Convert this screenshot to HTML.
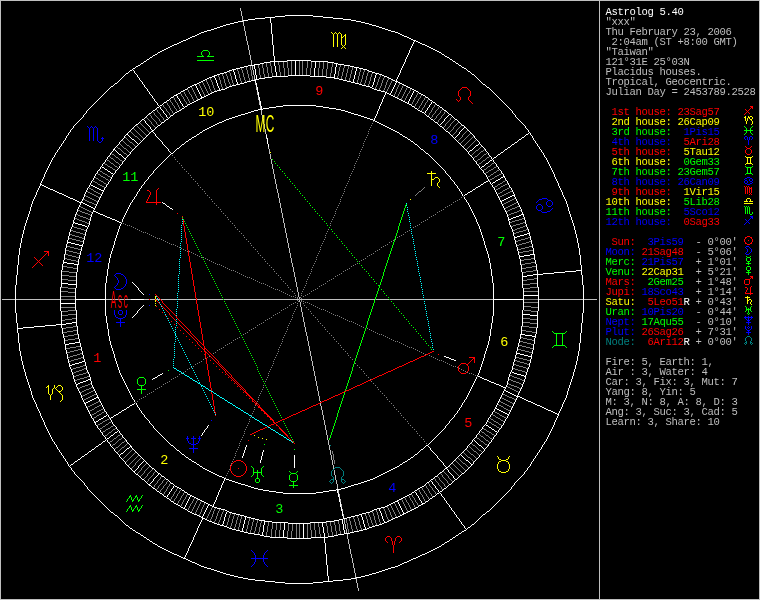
<!DOCTYPE html><html><head><meta charset="utf-8"><title>Astrolog 5.40</title><style>
html,body{margin:0;padding:0;background:#000;}
#w{position:relative;width:760px;height:600px;overflow:hidden;background:#000;}
#w svg{position:absolute;left:0;top:0;}
.l{position:absolute;left:605.5px;height:10px;line-height:10px;font-family:"Liberation Mono",monospace;font-size:10.6px;letter-spacing:-0.36px;white-space:pre;color:#bfbfbf;}
.h{position:absolute;font-family:"Liberation Mono",monospace;font-size:13.5px;letter-spacing:-0.1px;line-height:12px;height:12px;white-space:pre;}
.g{position:absolute;font-family:"Liberation Sans",sans-serif;-webkit-text-stroke:0.2px;white-space:pre;transform-origin:0 0;line-height:1;}
#t{position:absolute;left:0;top:0;width:760px;height:600px;will-change:transform;}
</style></head><body><div id="w">
<svg width="760" height="600" viewBox="0 0 760 600" shape-rendering="crispEdges" fill="none" stroke-width="1"><g transform="translate(0,0.5)"><path stroke="#bfbfbf" d="M0 0h760M0 1h1M599 1h1M759 1h1M0 2h1M599 2h1M759 2h1M0 3h1M599 3h1M759 3h1M0 4h1M599 4h1M759 4h1M0 5h1M599 5h1M759 5h1M0 6h1M599 6h1M759 6h1M0 7h1M599 7h1M759 7h1M0 8h1M240 8h1M599 8h1M759 8h1M0 9h1M240 9h1M599 9h1M759 9h1M0 10h1M240 10h1M599 10h1M759 10h1M0 11h1M241 11h1M599 11h1M759 11h1M0 12h1M241 12h1M599 12h1M759 12h1M0 13h1M241 13h1M599 13h1M759 13h1M0 14h1M241 14h1M599 14h1M759 14h1M0 15h1M241 15h1M599 15h1M759 15h1M0 16h1M242 16h1M599 16h1M759 16h1M0 17h1M242 17h1M599 17h1M759 17h1M0 18h1M242 18h1M599 18h1M759 18h1M0 19h1M242 19h1M599 19h1M759 19h1M0 20h1M242 20h1M599 20h1M759 20h1M0 21h1M243 21h1M599 21h1M759 21h1M0 22h1M243 22h1M599 22h1M759 22h1M0 23h1M243 23h1M599 23h1M759 23h1M0 24h1M243 24h1M599 24h1M759 24h1M0 25h1M243 25h1M599 25h1M759 25h1M0 26h1M244 26h1M599 26h1M759 26h1M0 27h1M244 27h1M599 27h1M759 27h1M0 28h1M244 28h1M599 28h1M759 28h1M0 29h1M244 29h1M599 29h1M759 29h1M0 30h1M244 30h1M599 30h1M759 30h1M0 31h1M245 31h1M599 31h1M759 31h1M0 32h1M245 32h1M599 32h1M759 32h1M0 33h1M245 33h1M599 33h1M759 33h1M0 34h1M245 34h1M599 34h1M759 34h1M0 35h1M245 35h1M599 35h1M759 35h1M0 36h1M246 36h1M599 36h1M759 36h1M0 37h1M246 37h1M599 37h1M759 37h1M0 38h1M246 38h1M599 38h1M759 38h1M0 39h1M246 39h1M599 39h1M759 39h1M0 40h1M246 40h1M599 40h1M759 40h1M0 41h1M247 41h1M599 41h1M759 41h1M0 42h1M247 42h1M599 42h1M759 42h1M0 43h1M247 43h1M599 43h1M759 43h1M0 44h1M247 44h1M599 44h1M759 44h1M0 45h1M248 45h1M599 45h1M759 45h1M0 46h1M248 46h1M599 46h1M759 46h1M0 47h1M248 47h1M599 47h1M759 47h1M0 48h1M248 48h1M599 48h1M759 48h1M0 49h1M248 49h1M599 49h1M759 49h1M0 50h1M249 50h1M599 50h1M759 50h1M0 51h1M249 51h1M599 51h1M759 51h1M0 52h1M249 52h1M599 52h1M759 52h1M0 53h1M249 53h1M599 53h1M759 53h1M0 54h1M249 54h1M599 54h1M759 54h1M0 55h1M250 55h1M599 55h1M759 55h1M0 56h1M250 56h1M599 56h1M759 56h1M0 57h1M250 57h1M599 57h1M759 57h1M0 58h1M250 58h1M599 58h1M759 58h1M0 59h1M250 59h1M599 59h1M759 59h1M0 60h1M251 60h1M599 60h1M759 60h1M0 61h1M251 61h1M599 61h1M759 61h1M0 62h1M251 62h1M599 62h1M759 62h1M0 63h1M251 63h1M599 63h1M759 63h1M0 64h1M251 64h1M599 64h1M759 64h1M0 65h1M599 65h1M759 65h1M0 66h1M252 66h1M599 66h1M759 66h1M0 67h1M252 67h1M599 67h1M759 67h1M0 68h1M252 68h1M599 68h1M759 68h1M0 69h1M252 69h1M599 69h1M759 69h1M0 70h1M253 70h1M599 70h1M759 70h1M0 71h1M253 71h1M599 71h1M759 71h1M0 72h1M253 72h1M599 72h1M759 72h1M0 73h1M253 73h1M599 73h1M759 73h1M0 74h1M253 74h1M599 74h1M759 74h1M0 75h1M254 75h1M599 75h1M759 75h1M0 76h1M254 76h1M599 76h1M759 76h1M0 77h1M254 77h1M599 77h1M759 77h1M0 78h1M254 78h1M599 78h1M759 78h1M0 79h1M254 79h1M599 79h1M759 79h1M0 80h1M599 80h1M759 80h1M0 81h1M599 81h1M759 81h1M0 82h1M599 82h1M759 82h1M0 83h1M255 83h1M599 83h1M759 83h1M0 84h1M255 84h1M599 84h1M759 84h1M0 85h1M599 85h1M759 85h1M0 86h1M599 86h1M759 86h1M0 87h1M256 87h1M599 87h1M759 87h1M0 88h1M256 88h1M599 88h1M759 88h1M0 89h1M256 89h1M599 89h1M759 89h1M0 90h1M599 90h1M759 90h1M0 91h1M599 91h1M759 91h1M0 92h1M257 92h1M599 92h1M759 92h1M0 93h1M257 93h1M599 93h1M759 93h1M0 94h1M257 94h1M599 94h1M759 94h1M0 95h1M599 95h1M759 95h1M0 96h1M599 96h1M759 96h1M0 97h1M258 97h1M599 97h1M759 97h1M0 98h1M258 98h1M599 98h1M759 98h1M0 99h1M258 99h1M599 99h1M759 99h1M0 100h1M599 100h1M759 100h1M0 101h1M259 101h1M599 101h1M759 101h1M0 102h1M259 102h1M599 102h1M759 102h1M0 103h1M259 103h1M599 103h1M759 103h1M0 104h1M259 104h1M599 104h1M759 104h1M0 105h1M599 105h1M759 105h1M0 106h1M260 106h1M599 106h1M759 106h1M0 107h1M260 107h1M599 107h1M759 107h1M0 108h1M260 108h1M599 108h1M759 108h1M0 109h1M599 109h1M759 109h1M0 110h1M261 110h1M599 110h1M759 110h1M0 111h1M261 111h1M599 111h1M759 111h1M0 112h1M261 112h1M599 112h1M759 112h1M0 113h1M261 113h1M599 113h1M759 113h1M0 114h1M261 114h1M599 114h1M759 114h1M0 115h1M262 115h1M599 115h1M759 115h1M0 116h1M262 116h1M599 116h1M759 116h1M0 117h1M262 117h1M599 117h1M759 117h1M0 118h1M262 118h1M599 118h1M759 118h1M0 119h1M263 119h1M599 119h1M759 119h1M0 120h1M263 120h1M599 120h1M759 120h1M0 121h1M263 121h1M599 121h1M759 121h1M0 122h1M263 122h1M599 122h1M759 122h1M0 123h1M263 123h1M599 123h1M759 123h1M0 124h1M264 124h1M599 124h1M759 124h1M0 125h1M264 125h1M599 125h1M759 125h1M0 126h1M264 126h1M599 126h1M759 126h1M0 127h1M264 127h1M599 127h1M759 127h1M0 128h1M264 128h1M599 128h1M759 128h1M0 129h1M265 129h1M599 129h1M759 129h1M0 130h1M265 130h1M599 130h1M759 130h1M0 131h1M265 131h1M599 131h1M759 131h1M0 132h1M265 132h1M599 132h1M759 132h1M0 133h1M265 133h1M599 133h1M759 133h1M0 134h1M266 134h1M599 134h1M759 134h1M0 135h1M599 135h1M759 135h1M0 136h1M599 136h1M759 136h1M0 137h1M599 137h1M759 137h1M0 138h1M266 138h1M599 138h1M759 138h1M0 139h1M599 139h1M759 139h1M0 140h1M599 140h1M759 140h1M0 141h1M599 141h1M759 141h1M0 142h1M599 142h1M759 142h1M0 143h1M599 143h1M759 143h1M0 144h1M599 144h1M759 144h1M0 145h1M599 145h1M759 145h1M0 146h1M599 146h1M759 146h1M0 147h1M268 147h1M599 147h1M759 147h1M0 148h1M268 148h1M599 148h1M759 148h1M0 149h1M269 149h1M599 149h1M759 149h1M0 150h1M269 150h1M599 150h1M759 150h1M0 151h1M269 151h1M599 151h1M759 151h1M0 152h1M269 152h1M599 152h1M759 152h1M0 153h1M269 153h1M599 153h1M759 153h1M0 154h1M270 154h1M599 154h1M759 154h1M0 155h1M270 155h1M599 155h1M759 155h1M0 156h1M270 156h1M599 156h1M759 156h1M0 157h1M270 157h1M599 157h1M759 157h1M0 158h1M270 158h1M599 158h1M759 158h1M0 159h1M271 159h1M599 159h1M759 159h1M0 160h1M271 160h1M599 160h1M759 160h1M0 161h1M271 161h1M599 161h1M759 161h1M0 162h1M271 162h1M599 162h1M759 162h1M0 163h1M271 163h1M599 163h1M759 163h1M0 164h1M272 164h1M599 164h1M759 164h1M0 165h1M272 165h1M599 165h1M759 165h1M0 166h1M272 166h1M599 166h1M759 166h1M0 167h1M272 167h1M599 167h1M759 167h1M0 168h1M272 168h1M599 168h1M759 168h1M0 169h1M273 169h1M599 169h1M759 169h1M0 170h1M273 170h1M599 170h1M759 170h1M0 171h1M273 171h1M599 171h1M759 171h1M0 172h1M273 172h1M599 172h1M759 172h1M0 173h1M273 173h1M599 173h1M759 173h1M0 174h1M274 174h1M599 174h1M759 174h1M0 175h1M274 175h1M599 175h1M759 175h1M0 176h1M274 176h1M599 176h1M759 176h1M0 177h1M274 177h1M599 177h1M759 177h1M0 178h1M274 178h1M599 178h1M759 178h1M0 179h1M275 179h1M599 179h1M759 179h1M0 180h1M275 180h1M599 180h1M759 180h1M0 181h1M275 181h1M599 181h1M759 181h1M0 182h1M275 182h1M599 182h1M759 182h1M0 183h1M275 183h1M599 183h1M759 183h1M0 184h1M276 184h1M599 184h1M759 184h1M0 185h1M276 185h1M599 185h1M759 185h1M0 186h1M276 186h1M599 186h1M759 186h1M0 187h1M276 187h1M599 187h1M759 187h1M0 188h1M276 188h1M599 188h1M759 188h1M0 189h1M277 189h1M599 189h1M759 189h1M0 190h1M277 190h1M599 190h1M759 190h1M0 191h1M277 191h1M599 191h1M759 191h1M0 192h1M277 192h1M599 192h1M759 192h1M0 193h1M278 193h1M599 193h1M759 193h1M0 194h1M278 194h1M599 194h1M759 194h1M0 195h1M278 195h1M599 195h1M759 195h1M0 196h1M278 196h1M599 196h1M759 196h1M0 197h1M278 197h1M599 197h1M759 197h1M0 198h1M279 198h1M599 198h1M759 198h1M0 199h1M279 199h1M599 199h1M759 199h1M0 200h1M279 200h1M599 200h1M759 200h1M0 201h1M279 201h1M599 201h1M759 201h1M0 202h1M279 202h1M599 202h1M759 202h1M0 203h1M280 203h1M599 203h1M759 203h1M0 204h1M280 204h1M599 204h1M759 204h1M0 205h1M280 205h1M599 205h1M759 205h1M0 206h1M280 206h1M599 206h1M759 206h1M0 207h1M280 207h1M599 207h1M759 207h1M0 208h1M281 208h1M599 208h1M759 208h1M0 209h1M281 209h1M599 209h1M759 209h1M0 210h1M281 210h1M599 210h1M759 210h1M0 211h1M281 211h1M599 211h1M759 211h1M0 212h1M281 212h1M599 212h1M759 212h1M0 213h1M282 213h1M599 213h1M759 213h1M0 214h1M282 214h1M599 214h1M759 214h1M0 215h1M282 215h1M599 215h1M759 215h1M0 216h1M282 216h1M599 216h1M759 216h1M0 217h1M282 217h1M599 217h1M759 217h1M0 218h1M283 218h1M599 218h1M759 218h1M0 219h1M283 219h1M599 219h1M759 219h1M0 220h1M283 220h1M599 220h1M759 220h1M0 221h1M283 221h1M599 221h1M759 221h1M0 222h1M283 222h1M599 222h1M759 222h1M0 223h1M284 223h1M599 223h1M759 223h1M0 224h1M284 224h1M599 224h1M759 224h1M0 225h1M284 225h1M599 225h1M759 225h1M0 226h1M284 226h1M599 226h1M759 226h1M0 227h1M284 227h1M599 227h1M759 227h1M0 228h1M285 228h1M599 228h1M759 228h1M0 229h1M285 229h1M599 229h1M759 229h1M0 230h1M285 230h1M599 230h1M759 230h1M0 231h1M285 231h1M599 231h1M759 231h1M0 232h1M285 232h1M599 232h1M759 232h1M0 233h1M286 233h1M599 233h1M759 233h1M0 234h1M286 234h1M599 234h1M759 234h1M0 235h1M286 235h1M599 235h1M759 235h1M0 236h1M286 236h1M599 236h1M759 236h1M0 237h1M286 237h1M599 237h1M759 237h1M0 238h1M287 238h1M599 238h1M759 238h1M0 239h1M287 239h1M599 239h1M759 239h1M0 240h1M287 240h1M599 240h1M759 240h1M0 241h1M287 241h1M599 241h1M759 241h1M0 242h1M287 242h1M599 242h1M759 242h1M0 243h1M288 243h1M599 243h1M759 243h1M0 244h1M288 244h1M599 244h1M759 244h1M0 245h1M288 245h1M599 245h1M759 245h1M0 246h1M288 246h1M599 246h1M759 246h1M0 247h1M288 247h1M599 247h1M759 247h1M0 248h1M289 248h1M599 248h1M759 248h1M0 249h1M289 249h1M599 249h1M759 249h1M0 250h1M289 250h1M599 250h1M759 250h1M0 251h1M289 251h1M599 251h1M759 251h1M0 252h1M289 252h1M599 252h1M759 252h1M0 253h1M290 253h1M599 253h1M759 253h1M0 254h1M290 254h1M599 254h1M759 254h1M0 255h1M290 255h1M599 255h1M759 255h1M0 256h1M290 256h1M599 256h1M759 256h1M0 257h1M290 257h1M599 257h1M759 257h1M0 258h1M291 258h1M599 258h1M759 258h1M0 259h1M291 259h1M599 259h1M759 259h1M0 260h1M291 260h1M599 260h1M759 260h1M0 261h1M291 261h1M599 261h1M759 261h1M0 262h1M291 262h1M599 262h1M759 262h1M0 263h1M292 263h1M599 263h1M759 263h1M0 264h1M292 264h1M599 264h1M759 264h1M0 265h1M292 265h1M599 265h1M759 265h1M0 266h1M292 266h1M599 266h1M759 266h1M0 267h1M293 267h1M599 267h1M759 267h1M0 268h1M293 268h1M599 268h1M759 268h1M0 269h1M293 269h1M599 269h1M759 269h1M0 270h1M293 270h1M599 270h1M759 270h1M0 271h1M293 271h1M599 271h1M759 271h1M0 272h1M294 272h1M599 272h1M759 272h1M0 273h1M294 273h1M599 273h1M759 273h1M0 274h1M294 274h1M599 274h1M759 274h1M0 275h1M294 275h1M599 275h1M759 275h1M0 276h1M294 276h1M599 276h1M759 276h1M0 277h1M295 277h1M599 277h1M759 277h1M0 278h1M295 278h1M599 278h1M759 278h1M0 279h1M295 279h1M599 279h1M759 279h1M0 280h1M295 280h1M599 280h1M759 280h1M0 281h1M295 281h1M599 281h1M759 281h1M0 282h1M296 282h1M599 282h1M759 282h1M0 283h1M296 283h1M599 283h1M759 283h1M0 284h1M296 284h1M599 284h1M759 284h1M0 285h1M296 285h1M599 285h1M759 285h1M0 286h1M296 286h1M599 286h1M759 286h1M0 287h1M297 287h1M599 287h1M759 287h1M0 288h1M297 288h1M599 288h1M759 288h1M0 289h1M297 289h1M599 289h1M759 289h1M0 290h1M297 290h1M599 290h1M759 290h1M0 291h1M297 291h1M599 291h1M759 291h1M0 292h1M298 292h1M599 292h1M759 292h1M0 293h1M298 293h1M599 293h1M759 293h1M0 294h1M298 294h1M599 294h1M759 294h1M0 295h1M298 295h1M599 295h1M759 295h1M0 296h1M298 296h1M599 296h1M759 296h1M0 297h1M299 297h1M599 297h1M759 297h1M0 298h1M299 298h1M599 298h1M759 298h1M0 299h1M2 299h13M16 299h44M106 299h25M144 299h5M150 299h5M156 299h4M161 299h16M178 299h18M197 299h26M224 299h75M300 299h75M376 299h13M390 299h34M425 299h68M539 299h44M584 299h13M599 299h1M759 299h1M0 300h1M299 300h1M599 300h1M759 300h1M0 301h1M299 301h1M599 301h1M759 301h1M0 302h1M300 302h1M599 302h1M759 302h1M0 303h1M300 303h1M599 303h1M759 303h1M0 304h1M300 304h1M599 304h1M759 304h1M0 305h1M300 305h1M599 305h1M759 305h1M0 306h1M300 306h1M599 306h1M759 306h1M0 307h1M301 307h1M599 307h1M759 307h1M0 308h1M301 308h1M599 308h1M759 308h1M0 309h1M301 309h1M599 309h1M759 309h1M0 310h1M301 310h1M599 310h1M759 310h1M0 311h1M301 311h1M599 311h1M759 311h1M0 312h1M302 312h1M599 312h1M759 312h1M0 313h1M302 313h1M599 313h1M759 313h1M0 314h1M302 314h1M599 314h1M759 314h1M0 315h1M302 315h1M599 315h1M759 315h1M0 316h1M302 316h1M599 316h1M759 316h1M0 317h1M303 317h1M599 317h1M759 317h1M0 318h1M303 318h1M599 318h1M759 318h1M0 319h1M303 319h1M599 319h1M759 319h1M0 320h1M303 320h1M599 320h1M759 320h1M0 321h1M303 321h1M599 321h1M759 321h1M0 322h1M304 322h1M599 322h1M759 322h1M0 323h1M304 323h1M599 323h1M759 323h1M0 324h1M304 324h1M599 324h1M759 324h1M0 325h1M304 325h1M599 325h1M759 325h1M0 326h1M304 326h1M599 326h1M759 326h1M0 327h1M305 327h1M599 327h1M759 327h1M0 328h1M305 328h1M599 328h1M759 328h1M0 329h1M305 329h1M599 329h1M759 329h1M0 330h1M305 330h1M599 330h1M759 330h1M0 331h1M305 331h1M599 331h1M759 331h1M0 332h1M306 332h1M599 332h1M759 332h1M0 333h1M306 333h1M599 333h1M759 333h1M0 334h1M306 334h1M599 334h1M759 334h1M0 335h1M306 335h1M599 335h1M759 335h1M0 336h1M307 336h1M599 336h1M759 336h1M0 337h1M307 337h1M599 337h1M759 337h1M0 338h1M307 338h1M599 338h1M759 338h1M0 339h1M307 339h1M599 339h1M759 339h1M0 340h1M307 340h1M599 340h1M759 340h1M0 341h1M308 341h1M599 341h1M759 341h1M0 342h1M308 342h1M599 342h1M759 342h1M0 343h1M308 343h1M599 343h1M759 343h1M0 344h1M308 344h1M599 344h1M759 344h1M0 345h1M308 345h1M599 345h1M759 345h1M0 346h1M309 346h1M599 346h1M759 346h1M0 347h1M309 347h1M599 347h1M759 347h1M0 348h1M309 348h1M599 348h1M759 348h1M0 349h1M309 349h1M599 349h1M759 349h1M0 350h1M309 350h1M599 350h1M759 350h1M0 351h1M310 351h1M599 351h1M759 351h1M0 352h1M310 352h1M599 352h1M759 352h1M0 353h1M310 353h1M599 353h1M759 353h1M0 354h1M310 354h1M599 354h1M759 354h1M0 355h1M310 355h1M599 355h1M759 355h1M0 356h1M311 356h1M599 356h1M759 356h1M0 357h1M311 357h1M599 357h1M759 357h1M0 358h1M311 358h1M599 358h1M759 358h1M0 359h1M311 359h1M599 359h1M759 359h1M0 360h1M311 360h1M599 360h1M759 360h1M0 361h1M312 361h1M599 361h1M759 361h1M0 362h1M312 362h1M599 362h1M759 362h1M0 363h1M312 363h1M599 363h1M759 363h1M0 364h1M312 364h1M599 364h1M759 364h1M0 365h1M312 365h1M599 365h1M759 365h1M0 366h1M313 366h1M599 366h1M759 366h1M0 367h1M313 367h1M599 367h1M759 367h1M0 368h1M313 368h1M599 368h1M759 368h1M0 369h1M313 369h1M599 369h1M759 369h1M0 370h1M313 370h1M599 370h1M759 370h1M0 371h1M314 371h1M599 371h1M759 371h1M0 372h1M314 372h1M599 372h1M759 372h1M0 373h1M314 373h1M599 373h1M759 373h1M0 374h1M314 374h1M599 374h1M759 374h1M0 375h1M314 375h1M599 375h1M759 375h1M0 376h1M315 376h1M599 376h1M759 376h1M0 377h1M315 377h1M599 377h1M759 377h1M0 378h1M315 378h1M599 378h1M759 378h1M0 379h1M315 379h1M599 379h1M759 379h1M0 380h1M315 380h1M599 380h1M759 380h1M0 381h1M316 381h1M599 381h1M759 381h1M0 382h1M316 382h1M599 382h1M759 382h1M0 383h1M316 383h1M599 383h1M759 383h1M0 384h1M316 384h1M599 384h1M759 384h1M0 385h1M316 385h1M599 385h1M759 385h1M0 386h1M317 386h1M599 386h1M759 386h1M0 387h1M317 387h1M599 387h1M759 387h1M0 388h1M317 388h1M599 388h1M759 388h1M0 389h1M317 389h1M599 389h1M759 389h1M0 390h1M317 390h1M599 390h1M759 390h1M0 391h1M318 391h1M599 391h1M759 391h1M0 392h1M318 392h1M599 392h1M759 392h1M0 393h1M318 393h1M599 393h1M759 393h1M0 394h1M318 394h1M599 394h1M759 394h1M0 395h1M318 395h1M599 395h1M759 395h1M0 396h1M319 396h1M599 396h1M759 396h1M0 397h1M319 397h1M599 397h1M759 397h1M0 398h1M319 398h1M599 398h1M759 398h1M0 399h1M319 399h1M599 399h1M759 399h1M0 400h1M319 400h1M599 400h1M759 400h1M0 401h1M320 401h1M599 401h1M759 401h1M0 402h1M599 402h1M759 402h1M0 403h1M320 403h1M599 403h1M759 403h1M0 404h1M320 404h1M599 404h1M759 404h1M0 405h1M320 405h1M599 405h1M759 405h1M0 406h1M321 406h1M599 406h1M759 406h1M0 407h1M321 407h1M599 407h1M759 407h1M0 408h1M321 408h1M599 408h1M759 408h1M0 409h1M321 409h1M599 409h1M759 409h1M0 410h1M322 410h1M599 410h1M759 410h1M0 411h1M322 411h1M599 411h1M759 411h1M0 412h1M322 412h1M599 412h1M759 412h1M0 413h1M322 413h1M599 413h1M759 413h1M0 414h1M322 414h1M599 414h1M759 414h1M0 415h1M323 415h1M599 415h1M759 415h1M0 416h1M323 416h1M599 416h1M759 416h1M0 417h1M323 417h1M599 417h1M759 417h1M0 418h1M323 418h1M599 418h1M759 418h1M0 419h1M323 419h1M599 419h1M759 419h1M0 420h1M324 420h1M599 420h1M759 420h1M0 421h1M324 421h1M599 421h1M759 421h1M0 422h1M324 422h1M599 422h1M759 422h1M0 423h1M324 423h1M599 423h1M759 423h1M0 424h1M324 424h1M599 424h1M759 424h1M0 425h1M325 425h1M599 425h1M759 425h1M0 426h1M325 426h1M599 426h1M759 426h1M0 427h1M325 427h1M599 427h1M759 427h1M0 428h1M325 428h1M599 428h1M759 428h1M0 429h1M325 429h1M599 429h1M759 429h1M0 430h1M326 430h1M599 430h1M759 430h1M0 431h1M326 431h1M599 431h1M759 431h1M0 432h1M326 432h1M599 432h1M759 432h1M0 433h1M326 433h1M599 433h1M759 433h1M0 434h1M326 434h1M599 434h1M759 434h1M0 435h1M327 435h1M599 435h1M759 435h1M0 436h1M327 436h1M599 436h1M759 436h1M0 437h1M327 437h1M599 437h1M759 437h1M0 438h1M327 438h1M599 438h1M759 438h1M0 439h1M327 439h1M599 439h1M759 439h1M0 440h1M328 440h1M599 440h1M759 440h1M0 441h1M328 441h1M599 441h1M759 441h1M0 442h1M328 442h1M599 442h1M759 442h1M0 443h1M328 443h1M599 443h1M759 443h1M0 444h1M328 444h1M599 444h1M759 444h1M0 445h1M329 445h1M599 445h1M759 445h1M0 446h1M329 446h1M599 446h1M759 446h1M0 447h1M329 447h1M599 447h1M759 447h1M0 448h1M329 448h1M599 448h1M759 448h1M0 449h1M329 449h1M599 449h1M759 449h1M0 450h1M330 450h1M599 450h1M759 450h1M0 451h1M330 451h1M599 451h1M759 451h1M0 452h1M330 452h1M599 452h1M759 452h1M0 453h1M330 453h1M599 453h1M759 453h1M0 454h1M330 454h1M599 454h1M759 454h1M0 455h1M331 455h1M599 455h1M759 455h1M0 456h1M331 456h1M599 456h1M759 456h1M0 457h1M331 457h1M599 457h1M759 457h1M0 458h1M331 458h1M599 458h1M759 458h1M0 459h1M331 459h1M599 459h1M759 459h1M0 460h1M332 460h1M599 460h1M759 460h1M0 461h1M332 461h1M599 461h1M759 461h1M0 462h1M332 462h1M599 462h1M759 462h1M0 463h1M332 463h1M599 463h1M759 463h1M0 464h1M332 464h1M599 464h1M759 464h1M0 465h1M333 465h1M599 465h1M759 465h1M0 466h1M333 466h1M599 466h1M759 466h1M0 467h1M333 467h1M599 467h1M759 467h1M0 468h1M333 468h1M599 468h1M759 468h1M0 469h1M599 469h1M759 469h1M0 470h1M334 470h1M599 470h1M759 470h1M0 471h1M334 471h1M599 471h1M759 471h1M0 472h1M334 472h1M599 472h1M759 472h1M0 473h1M334 473h1M599 473h1M759 473h1M0 474h1M334 474h1M599 474h1M759 474h1M0 475h1M335 475h1M599 475h1M759 475h1M0 476h1M335 476h1M599 476h1M759 476h1M0 477h1M335 477h1M599 477h1M759 477h1M0 478h1M335 478h1M599 478h1M759 478h1M0 479h1M335 479h1M599 479h1M759 479h1M0 480h1M336 480h1M599 480h1M759 480h1M0 481h1M336 481h1M599 481h1M759 481h1M0 482h1M336 482h1M599 482h1M759 482h1M0 483h1M336 483h1M599 483h1M759 483h1M0 484h1M337 484h1M599 484h1M759 484h1M0 485h1M337 485h1M599 485h1M759 485h1M0 486h1M337 486h1M599 486h1M759 486h1M0 487h1M337 487h1M599 487h1M759 487h1M0 488h1M337 488h1M599 488h1M759 488h1M0 489h1M599 489h1M759 489h1M0 490h1M338 490h1M599 490h1M759 490h1M0 491h1M338 491h1M599 491h1M759 491h1M0 492h1M338 492h1M599 492h1M759 492h1M0 493h1M599 493h1M759 493h1M0 494h1M339 494h1M599 494h1M759 494h1M0 495h1M339 495h1M599 495h1M759 495h1M0 496h1M339 496h1M599 496h1M759 496h1M0 497h1M599 497h1M759 497h1M0 498h1M599 498h1M759 498h1M0 499h1M340 499h1M599 499h1M759 499h1M0 500h1M340 500h1M599 500h1M759 500h1M0 501h1M340 501h1M599 501h1M759 501h1M0 502h1M599 502h1M759 502h1M0 503h1M599 503h1M759 503h1M0 504h1M341 504h1M599 504h1M759 504h1M0 505h1M341 505h1M599 505h1M759 505h1M0 506h1M341 506h1M599 506h1M759 506h1M0 507h1M599 507h1M759 507h1M0 508h1M599 508h1M759 508h1M0 509h1M342 509h1M599 509h1M759 509h1M0 510h1M342 510h1M599 510h1M759 510h1M0 511h1M599 511h1M759 511h1M0 512h1M599 512h1M759 512h1M0 513h1M599 513h1M759 513h1M0 514h1M343 514h1M599 514h1M759 514h1M0 515h1M343 515h1M599 515h1M759 515h1M0 516h1M599 516h1M759 516h1M0 517h1M599 517h1M759 517h1M0 518h1M599 518h1M759 518h1M0 519h1M344 519h1M599 519h1M759 519h1M0 520h1M344 520h1M599 520h1M759 520h1M0 521h1M344 521h1M599 521h1M759 521h1M0 522h1M344 522h1M599 522h1M759 522h1M0 523h1M344 523h1M599 523h1M759 523h1M0 524h1M345 524h1M599 524h1M759 524h1M0 525h1M345 525h1M599 525h1M759 525h1M0 526h1M345 526h1M599 526h1M759 526h1M0 527h1M345 527h1M599 527h1M759 527h1M0 528h1M345 528h1M599 528h1M759 528h1M0 529h1M346 529h1M599 529h1M759 529h1M0 530h1M346 530h1M599 530h1M759 530h1M0 531h1M346 531h1M599 531h1M759 531h1M0 532h1M346 532h1M599 532h1M759 532h1M0 533h1M599 533h1M759 533h1M0 534h1M347 534h1M599 534h1M759 534h1M0 535h1M347 535h1M599 535h1M759 535h1M0 536h1M347 536h1M599 536h1M759 536h1M0 537h1M347 537h1M599 537h1M759 537h1M0 538h1M347 538h1M599 538h1M759 538h1M0 539h1M348 539h1M599 539h1M759 539h1M0 540h1M348 540h1M599 540h1M759 540h1M0 541h1M348 541h1M599 541h1M759 541h1M0 542h1M348 542h1M599 542h1M759 542h1M0 543h1M348 543h1M599 543h1M759 543h1M0 544h1M349 544h1M599 544h1M759 544h1M0 545h1M349 545h1M599 545h1M759 545h1M0 546h1M349 546h1M599 546h1M759 546h1M0 547h1M349 547h1M599 547h1M759 547h1M0 548h1M349 548h1M599 548h1M759 548h1M0 549h1M350 549h1M599 549h1M759 549h1M0 550h1M350 550h1M599 550h1M759 550h1M0 551h1M350 551h1M599 551h1M759 551h1M0 552h1M350 552h1M599 552h1M759 552h1M0 553h1M350 553h1M599 553h1M759 553h1M0 554h1M351 554h1M599 554h1M759 554h1M0 555h1M351 555h1M599 555h1M759 555h1M0 556h1M351 556h1M599 556h1M759 556h1M0 557h1M351 557h1M599 557h1M759 557h1M0 558h1M352 558h1M599 558h1M759 558h1M0 559h1M352 559h1M599 559h1M759 559h1M0 560h1M352 560h1M599 560h1M759 560h1M0 561h1M352 561h1M599 561h1M759 561h1M0 562h1M352 562h1M599 562h1M759 562h1M0 563h1M353 563h1M599 563h1M759 563h1M0 564h1M353 564h1M599 564h1M759 564h1M0 565h1M353 565h1M599 565h1M759 565h1M0 566h1M353 566h1M599 566h1M759 566h1M0 567h1M353 567h1M599 567h1M759 567h1M0 568h1M354 568h1M599 568h1M759 568h1M0 569h1M354 569h1M599 569h1M759 569h1M0 570h1M354 570h1M599 570h1M759 570h1M0 571h1M354 571h1M599 571h1M759 571h1M0 572h1M354 572h1M599 572h1M759 572h1M0 573h1M355 573h1M599 573h1M759 573h1M0 574h1M355 574h1M599 574h1M759 574h1M0 575h1M355 575h1M599 575h1M759 575h1M0 576h1M355 576h1M599 576h1M759 576h1M0 577h1M355 577h1M599 577h1M759 577h1M0 578h1M356 578h1M599 578h1M759 578h1M0 579h1M356 579h1M599 579h1M759 579h1M0 580h1M356 580h1M599 580h1M759 580h1M0 581h1M356 581h1M599 581h1M759 581h1M0 582h1M356 582h1M599 582h1M759 582h1M0 583h1M357 583h1M599 583h1M759 583h1M0 584h1M357 584h1M599 584h1M759 584h1M0 585h1M357 585h1M599 585h1M759 585h1M0 586h1M357 586h1M599 586h1M759 586h1M0 587h1M357 587h1M599 587h1M759 587h1M0 588h1M358 588h1M599 588h1M759 588h1M0 589h1M358 589h1M599 589h1M759 589h1M0 590h1M358 590h1M599 590h1M759 590h1M0 591h1M599 591h1M759 591h1M0 592h1M599 592h1M759 592h1M0 593h1M599 593h1M759 593h1M0 594h1M599 594h1M759 594h1M0 595h1M599 595h1M759 595h1M0 596h1M599 596h1M759 596h1M0 597h1M599 597h1M759 597h1M0 598h1M599 598h1M759 598h1M0 599h760"/><path stroke="#ffffff" d="M285 15h28M275 16h10M313 16h10M265 17h10M323 17h10M255 18h10M270 18h1M333 18h10M248 19h7M270 19h1M343 19h8M243 20h5M270 20h1M351 20h5M238 21h5M270 21h1M356 21h5M234 22h4M270 22h1M361 22h4M230 23h4M271 23h1M365 23h4M226 24h4M271 24h1M369 24h3M223 25h3M271 25h1M372 25h4M220 26h3M271 26h1M376 26h3M217 27h3M271 27h1M379 27h3M214 28h3M271 28h1M382 28h3M211 29h3M271 29h1M385 29h3M207 30h4M271 30h1M388 30h3M204 31h3M271 31h1M391 31h4M201 32h3M271 32h1M395 32h3M199 33h2M271 33h1M398 33h2M197 34h2M272 34h1M400 34h2M195 35h2M272 35h1M402 35h2M192 36h3M272 36h1M404 36h3M190 37h2M272 37h1M407 37h2M188 38h2M272 38h1M409 38h2M186 39h2M272 39h1M411 39h2M183 40h3M272 40h1M413 40h3M181 41h2M272 41h1M414 41h1M416 41h2M179 42h2M272 42h1M413 42h1M418 42h2M177 43h2M272 43h1M413 43h1M420 43h2M174 44h3M272 44h1M412 44h1M422 44h3M172 45h2M273 45h1M412 45h1M425 45h2M170 46h2M273 46h1M411 46h1M427 46h2M168 47h2M273 47h1M411 47h1M429 47h2M166 48h2M273 48h1M410 48h1M431 48h2M164 49h2M273 49h1M410 49h1M433 49h2M162 50h2M273 50h1M409 50h1M435 50h2M160 51h2M273 51h1M409 51h1M437 51h2M158 52h2M273 52h1M409 52h1M439 52h2M157 53h1M273 53h1M408 53h1M441 53h1M155 54h2M273 54h1M408 54h1M442 54h2M153 55h2M273 55h1M407 55h1M444 55h1M152 56h1M274 56h1M407 56h1M445 56h2M150 57h2M274 57h1M406 57h1M447 57h2M149 58h1M274 58h1M406 58h1M449 58h1M147 59h2M274 59h1M405 59h1M450 59h2M146 60h1M274 60h1M287 60h24M405 60h1M452 60h1M144 61h2M270 61h17M295 61h1M311 61h17M405 61h1M453 61h2M143 62h1M264 62h6M274 62h1M295 62h1M315 62h1M328 62h6M404 62h1M455 62h1M141 63h2M260 63h4M274 63h1M295 63h1M315 63h1M334 63h4M404 63h1M456 63h2M140 64h1M254 64h6M274 64h1M295 64h1M315 64h1M336 64h1M338 64h6M403 64h1M458 64h1M138 65h2M248 65h7M274 65h1M295 65h1M315 65h1M336 65h1M344 65h6M403 65h1M459 65h2M136 66h2M244 66h4M254 66h1M275 66h1M295 66h1M315 66h1M336 66h1M350 66h4M402 66h1M461 66h1M135 67h1M240 67h4M254 67h1M275 67h1M295 67h1M315 67h1M335 67h1M354 67h5M402 67h1M462 67h2M133 68h2M236 68h4M254 68h1M275 68h1M295 68h1M314 68h1M335 68h1M356 68h1M359 68h4M401 68h1M464 68h2M132 69h1M232 69h4M255 69h1M275 69h1M295 69h1M314 69h1M335 69h1M356 69h1M363 69h4M401 69h1M466 69h1M130 70h2M133 70h1M229 70h3M233 70h1M255 70h1M275 70h1M295 70h1M314 70h1M335 70h1M356 70h1M367 70h2M400 70h1M467 70h1M129 71h1M134 71h1M227 71h2M233 71h1M255 71h1M275 71h1M295 71h1M314 71h1M335 71h1M355 71h1M369 71h3M400 71h1M468 71h2M128 72h1M134 72h1M224 72h3M234 72h1M255 72h1M276 72h1M295 72h1M314 72h1M335 72h1M355 72h1M372 72h3M400 72h1M470 72h1M126 73h2M135 73h1M220 73h4M234 73h1M255 73h1M276 73h1M295 73h1M314 73h1M335 73h1M355 73h1M375 73h4M399 73h1M471 73h1M125 74h1M136 74h1M217 74h3M234 74h1M255 74h1M276 74h1M295 74h1M314 74h1M334 74h1M355 74h1M376 74h1M379 74h3M399 74h1M472 74h2M124 75h1M137 75h1M214 75h3M235 75h1M256 75h1M276 75h1M288 75h22M314 75h1M334 75h1M354 75h1M375 75h1M382 75h2M398 75h1M474 75h1M123 76h1M137 76h1M212 76h3M235 76h1M256 76h1M272 76h16M310 76h16M334 76h1M354 76h1M375 76h1M384 76h3M398 76h1M475 76h1M122 77h1M138 77h1M209 77h3M214 77h1M235 77h1M256 77h1M265 77h7M326 77h9M354 77h1M375 77h1M387 77h2M397 77h1M476 77h1M121 78h1M139 78h1M207 78h2M215 78h1M235 78h1M256 78h1M259 78h6M334 78h5M354 78h1M374 78h1M389 78h2M397 78h1M477 78h1M120 79h1M139 79h1M205 79h2M215 79h1M236 79h1M255 79h4M339 79h4M353 79h1M374 79h1M391 79h2M396 79h1M478 79h1M119 80h1M140 80h1M203 80h2M216 80h1M236 80h1M251 80h5M343 80h4M353 80h1M374 80h1M393 80h2M396 80h1M479 80h1M118 81h1M141 81h1M201 81h2M216 81h1M236 81h1M247 81h4M255 81h1M347 81h4M353 81h1M374 81h1M395 81h3M480 81h1M117 82h1M142 82h1M199 82h2M216 82h1M237 82h1M244 82h3M255 82h1M351 82h4M373 82h1M396 82h1M398 82h2M481 82h1M115 83h2M142 83h1M197 83h2M217 83h1M237 83h1M240 83h4M256 83h1M355 83h4M373 83h1M395 83h1M400 83h2M482 83h1M114 84h1M143 84h1M194 84h3M217 84h1M236 84h4M256 84h1M359 84h3M373 84h1M395 84h1M402 84h2M483 84h2M113 85h1M144 85h1M192 85h2M195 85h1M217 85h1M232 85h4M256 85h1M362 85h4M372 85h1M394 85h1M404 85h2M485 85h1M111 86h2M144 86h1M190 86h2M196 86h1M218 86h1M229 86h3M256 86h1M366 86h4M372 86h1M394 86h1M406 86h2M486 86h1M110 87h1M145 87h1M188 87h2M196 87h1M218 87h1M227 87h2M257 87h1M370 87h2M393 87h1M408 87h2M487 87h2M109 88h1M146 88h1M187 88h1M197 88h1M219 88h1M225 88h2M257 88h1M372 88h2M393 88h1M410 88h2M489 88h1M108 89h1M147 89h1M185 89h2M197 89h1M219 89h1M221 89h4M257 89h1M374 89h3M392 89h1M412 89h2M490 89h1M107 90h1M147 90h1M183 90h2M198 90h1M217 90h4M257 90h1M377 90h4M392 90h1M414 90h2M491 90h1M106 91h1M148 91h1M181 91h2M198 91h1M214 91h3M257 91h1M381 91h4M391 91h1M413 91h1M416 91h2M492 91h1M105 92h1M149 92h1M180 92h1M199 92h1M212 92h2M258 92h1M385 92h2M391 92h1M413 92h1M418 92h1M493 92h1M104 93h1M149 93h1M178 93h2M199 93h1M210 93h2M258 93h1M385 93h1M387 93h2M390 93h1M412 93h1M419 93h2M494 93h1M103 94h1M150 94h1M176 94h2M200 94h1M208 94h2M258 94h1M385 94h1M389 94h2M412 94h1M421 94h2M495 94h1M102 95h1M151 95h1M174 95h3M200 95h1M206 95h2M258 95h1M384 95h1M391 95h2M411 95h1M423 95h2M496 95h1M101 96h1M152 96h1M173 96h1M177 96h1M201 96h1M204 96h2M258 96h1M384 96h1M393 96h2M411 96h1M425 96h1M497 96h1M100 97h1M152 97h1M171 97h2M177 97h1M201 97h3M259 97h1M383 97h1M395 97h2M410 97h1M426 97h2M498 97h1M99 98h1M153 98h1M170 98h1M178 98h1M200 98h2M259 98h1M383 98h1M397 98h2M410 98h1M428 98h1M499 98h1M98 99h1M154 99h1M169 99h1M179 99h1M198 99h2M259 99h1M382 99h1M399 99h2M409 99h1M429 99h1M500 99h1M97 100h1M154 100h1M167 100h2M179 100h1M196 100h2M259 100h1M382 100h1M401 100h2M409 100h1M430 100h2M501 100h1M96 101h1M155 101h1M166 101h1M180 101h1M194 101h2M260 101h1M382 101h1M403 101h2M408 101h1M432 101h1M502 101h1M95 102h1M156 102h1M164 102h2M180 102h1M192 102h2M260 102h1M381 102h1M405 102h2M408 102h1M431 102h1M433 102h2M503 102h1M94 103h1M157 103h1M163 103h1M181 103h1M190 103h2M260 103h1M381 103h1M407 103h2M431 103h1M435 103h1M504 103h1M93 104h1M157 104h1M162 104h1M182 104h1M188 104h2M260 104h1M380 104h1M409 104h2M430 104h1M436 104h1M505 104h1M92 105h1M158 105h1M160 105h2M182 105h1M187 105h1M260 105h1M283 105h33M380 105h1M411 105h1M429 105h1M437 105h2M506 105h1M91 106h1M159 106h1M183 106h1M185 106h2M261 106h1M276 106h7M316 106h7M379 106h1M412 106h2M429 106h1M439 106h1M507 106h1M90 107h1M157 107h2M160 107h1M184 107h1M261 107h1M269 107h7M323 107h6M379 107h1M414 107h1M428 107h1M440 107h2M508 107h1M89 108h1M156 108h1M160 108h1M182 108h2M261 108h1M263 108h6M329 108h7M379 108h1M415 108h2M427 108h1M442 108h1M509 108h1M88 109h1M155 109h1M161 109h1M181 109h1M258 109h5M336 109h5M378 109h1M417 109h1M427 109h1M443 109h1M510 109h1M87 110h1M153 110h2M162 110h1M179 110h2M254 110h4M341 110h4M378 110h1M418 110h2M426 110h1M444 110h2M511 110h1M86 111h1M152 111h1M163 111h1M177 111h2M251 111h3M345 111h3M377 111h1M420 111h2M425 111h1M446 111h1M512 111h1M86 112h1M151 112h1M163 112h1M175 112h2M248 112h3M348 112h3M377 112h1M422 112h2M425 112h1M447 112h1M512 112h1M85 113h1M149 113h2M164 113h1M174 113h1M245 113h3M351 113h3M377 113h1M424 113h1M448 113h1M513 113h1M84 114h1M148 114h1M165 114h1M173 114h1M241 114h4M354 114h4M376 114h1M425 114h1M449 114h2M514 114h1M83 115h1M147 115h1M166 115h1M171 115h2M238 115h3M358 115h3M376 115h1M426 115h1M448 115h1M451 115h1M515 115h1M83 116h1M146 116h1M166 116h1M170 116h1M235 116h3M361 116h3M375 116h1M427 116h2M447 116h1M452 116h1M515 116h1M82 117h1M145 117h1M167 117h1M169 117h1M232 117h3M364 117h3M375 117h1M429 117h1M446 117h1M453 117h1M516 117h1M81 118h1M144 118h1M168 118h1M229 118h3M367 118h3M374 118h1M430 118h1M445 118h1M454 118h1M517 118h1M80 119h1M142 119h2M166 119h2M226 119h3M370 119h3M374 119h1M431 119h2M444 119h1M455 119h2M518 119h1M79 120h1M141 120h1M144 120h1M165 120h1M224 120h2M373 120h2M433 120h1M444 120h1M457 120h1M519 120h1M78 121h1M140 121h1M145 121h1M164 121h1M222 121h2M375 121h2M434 121h1M443 121h1M458 121h1M520 121h1M77 122h1M139 122h1M145 122h1M162 122h2M219 122h3M377 122h2M435 122h2M442 122h1M459 122h1M521 122h1M76 123h1M138 123h1M146 123h1M161 123h1M217 123h2M379 123h2M437 123h1M441 123h1M460 123h1M522 123h1M75 124h1M136 124h2M147 124h1M160 124h1M215 124h2M381 124h2M438 124h1M440 124h1M461 124h1M523 124h1M74 125h1M135 125h1M148 125h1M158 125h2M213 125h2M383 125h2M439 125h1M462 125h2M524 125h1M73 126h1M134 126h1M149 126h1M157 126h1M211 126h2M385 126h2M440 126h2M464 126h1M525 126h1M73 127h1M133 127h1M150 127h1M156 127h1M209 127h2M387 127h2M442 127h1M464 127h2M525 127h1M72 128h1M132 128h1M150 128h1M155 128h1M207 128h2M389 128h2M443 128h1M463 128h1M466 128h1M526 128h1M71 129h1M131 129h1M151 129h1M154 129h1M205 129h2M391 129h2M444 129h1M462 129h1M467 129h1M527 129h1M70 130h1M130 130h1M152 130h2M203 130h2M393 130h2M445 130h1M461 130h1M468 130h1M528 130h1M70 131h1M129 131h1M151 131h2M202 131h1M395 131h2M446 131h2M460 131h1M469 131h1M528 131h1M69 132h1M128 132h1M150 132h1M153 132h1M200 132h2M397 132h2M448 132h1M459 132h1M470 132h1M529 132h1M68 133h1M127 133h1M149 133h1M154 133h1M199 133h1M399 133h1M449 133h1M459 133h1M471 133h1M528 133h1M530 133h1M68 134h1M126 134h2M148 134h1M155 134h1M197 134h2M400 134h2M450 134h1M458 134h1M472 134h1M526 134h2M530 134h1M67 135h1M125 135h1M128 135h1M147 135h1M155 135h1M196 135h1M266 135h1M402 135h1M451 135h1M457 135h1M473 135h1M525 135h1M531 135h1M66 136h1M124 136h1M129 136h1M146 136h1M156 136h1M194 136h2M266 136h1M403 136h2M452 136h1M456 136h1M474 136h1M524 136h1M532 136h1M66 137h1M124 137h1M130 137h1M145 137h1M157 137h1M192 137h2M266 137h1M405 137h2M453 137h1M455 137h1M474 137h1M522 137h2M532 137h1M65 138h1M123 138h1M131 138h1M144 138h1M158 138h1M191 138h1M267 138h1M407 138h1M454 138h1M475 138h1M521 138h1M533 138h1M65 139h1M122 139h1M132 139h2M143 139h1M159 139h1M189 139h2M267 139h1M408 139h2M455 139h1M476 139h1M519 139h2M533 139h1M64 140h1M121 140h1M134 140h1M142 140h1M160 140h1M188 140h1M267 140h1M410 140h1M456 140h1M477 140h1M518 140h1M534 140h1M63 141h1M120 141h1M135 141h1M141 141h1M161 141h1M186 141h2M267 141h1M411 141h2M457 141h1M478 141h1M517 141h1M535 141h1M63 142h1M119 142h1M136 142h1M140 142h1M162 142h1M185 142h1M267 142h1M413 142h1M458 142h1M479 142h1M515 142h2M535 142h1M62 143h1M119 143h1M137 143h1M139 143h1M162 143h1M184 143h1M267 143h1M414 143h1M459 143h1M479 143h1M514 143h1M536 143h1M61 144h1M118 144h1M138 144h1M163 144h1M182 144h2M268 144h1M415 144h2M460 144h1M478 144h1M480 144h1M512 144h2M537 144h1M61 145h1M117 145h1M137 145h1M164 145h1M181 145h1M268 145h1M417 145h1M461 145h1M476 145h2M481 145h1M511 145h1M537 145h1M60 146h1M116 146h1M136 146h1M165 146h1M180 146h1M268 146h1M418 146h1M462 146h1M475 146h1M482 146h1M510 146h1M538 146h1M59 147h1M115 147h1M135 147h1M166 147h1M179 147h1M419 147h1M463 147h1M474 147h1M483 147h1M508 147h2M539 147h1M59 148h1M114 148h1M134 148h1M167 148h1M177 148h2M420 148h1M464 148h1M473 148h1M484 148h1M507 148h1M539 148h1M58 149h1M113 149h2M133 149h1M168 149h1M176 149h1M421 149h2M465 149h1M472 149h1M485 149h1M505 149h2M540 149h1M57 150h1M113 150h1M115 150h1M132 150h1M168 150h1M175 150h1M423 150h1M466 150h1M470 150h2M485 150h1M504 150h1M541 150h1M57 151h1M112 151h1M116 151h1M131 151h1M169 151h1M174 151h1M424 151h1M467 151h1M469 151h1M486 151h1M503 151h1M541 151h1M56 152h1M111 152h1M117 152h1M130 152h1M170 152h1M173 152h1M425 152h1M468 152h1M487 152h1M501 152h2M542 152h1M55 153h1M110 153h1M118 153h1M130 153h1M171 153h2M426 153h2M468 153h1M488 153h1M500 153h1M543 153h1M55 154h1M110 154h1M119 154h2M129 154h1M170 154h1M428 154h1M469 154h1M488 154h1M498 154h2M543 154h1M54 155h1M109 155h1M121 155h1M128 155h1M169 155h1M429 155h1M470 155h1M489 155h1M497 155h1M544 155h1M54 156h1M108 156h1M122 156h1M127 156h1M168 156h1M430 156h1M471 156h1M490 156h1M496 156h1M544 156h1M53 157h1M107 157h1M123 157h1M126 157h1M167 157h1M431 157h1M472 157h1M491 157h1M494 157h2M545 157h1M52 158h1M107 158h1M124 158h2M166 158h1M432 158h1M473 158h1M491 158h1M493 158h1M546 158h1M52 159h1M106 159h1M125 159h1M165 159h1M433 159h1M473 159h1M492 159h1M546 159h1M51 160h1M105 160h1M124 160h1M164 160h1M434 160h1M474 160h1M490 160h2M493 160h1M547 160h1M51 161h1M105 161h1M123 161h1M163 161h1M435 161h1M475 161h1M489 161h1M493 161h1M547 161h1M50 162h1M104 162h1M122 162h1M162 162h1M436 162h1M476 162h1M488 162h1M494 162h1M548 162h1M50 163h1M103 163h1M122 163h1M161 163h1M437 163h1M476 163h1M486 163h2M495 163h1M548 163h1M49 164h1M102 164h1M121 164h1M160 164h1M438 164h1M477 164h1M485 164h1M496 164h1M549 164h1M49 165h1M102 165h1M120 165h1M159 165h1M439 165h1M478 165h1M484 165h1M496 165h1M549 165h1M48 166h1M101 166h1M119 166h1M158 166h1M440 166h1M479 166h1M482 166h2M497 166h1M550 166h1M48 167h1M100 167h1M102 167h2M119 167h1M157 167h1M441 167h1M479 167h1M481 167h1M498 167h1M550 167h1M47 168h1M100 168h1M104 168h1M118 168h1M156 168h1M442 168h1M480 168h1M498 168h1M551 168h1M47 169h1M99 169h1M105 169h2M117 169h1M155 169h1M443 169h1M481 169h1M499 169h1M551 169h1M46 170h1M98 170h1M107 170h1M116 170h1M154 170h1M444 170h1M482 170h1M500 170h1M552 170h1M46 171h1M97 171h1M108 171h2M115 171h1M153 171h1M445 171h1M483 171h1M501 171h1M552 171h1M45 172h1M97 172h1M110 172h1M115 172h1M153 172h1M445 172h1M483 172h1M501 172h1M553 172h1M45 173h1M96 173h1M111 173h2M114 173h1M152 173h1M446 173h1M484 173h1M502 173h1M553 173h1M44 174h1M95 174h1M113 174h1M151 174h1M447 174h1M485 174h1M503 174h1M554 174h1M44 175h1M95 175h1M112 175h1M150 175h1M448 175h1M486 175h1M503 175h1M554 175h1M44 176h1M94 176h1M112 176h1M149 176h1M449 176h1M486 176h1M503 176h2M554 176h1M43 177h1M94 177h1M111 177h1M148 177h1M450 177h1M487 177h1M501 177h2M504 177h1M555 177h1M43 178h1M93 178h1M111 178h1M148 178h1M450 178h1M487 178h1M500 178h1M505 178h1M555 178h1M42 179h1M93 179h1M110 179h1M147 179h1M451 179h1M488 179h1M498 179h2M505 179h1M556 179h1M42 180h1M92 180h1M110 180h1M146 180h1M452 180h1M488 180h1M496 180h2M506 180h1M556 180h1M41 181h1M91 181h1M109 181h1M145 181h1M453 181h1M486 181h2M489 181h1M495 181h1M507 181h1M557 181h1M41 182h1M91 182h1M108 182h1M144 182h1M454 182h1M484 182h2M490 182h1M493 182h2M507 182h1M557 182h1M40 183h1M90 183h1M108 183h1M144 183h1M454 183h1M483 183h1M490 183h1M492 183h1M508 183h1M558 183h1M40 184h2M90 184h1M107 184h1M143 184h1M455 184h1M481 184h2M491 184h1M508 184h1M558 184h1M40 185h1M42 185h2M89 185h1M91 185h2M106 185h1M142 185h1M456 185h1M480 185h1M492 185h1M509 185h1M558 185h1M39 186h1M44 186h2M89 186h1M93 186h2M106 186h1M141 186h1M457 186h1M478 186h2M492 186h1M509 186h1M559 186h1M39 187h1M46 187h2M88 187h1M95 187h2M105 187h1M141 187h1M457 187h1M476 187h2M493 187h1M510 187h1M559 187h1M38 188h1M48 188h2M87 188h1M97 188h2M104 188h1M140 188h1M458 188h1M475 188h1M494 188h1M511 188h1M560 188h1M38 189h1M50 189h3M87 189h1M99 189h2M104 189h1M139 189h1M459 189h1M473 189h2M494 189h1M511 189h1M560 189h1M37 190h1M53 190h2M86 190h1M101 190h3M139 190h1M459 190h1M472 190h1M495 190h1M512 190h1M561 190h1M37 191h1M55 191h2M86 191h1M103 191h1M138 191h1M460 191h1M470 191h2M495 191h1M512 191h1M561 191h1M36 192h1M57 192h2M85 192h1M102 192h1M137 192h1M461 192h1M468 192h2M496 192h1M513 192h1M562 192h1M36 193h1M59 193h3M85 193h1M102 193h1M137 193h1M461 193h1M467 193h1M496 193h1M513 193h1M562 193h1M36 194h1M62 194h2M84 194h1M101 194h1M136 194h1M462 194h1M465 194h2M497 194h1M514 194h1M562 194h1M35 195h1M64 195h2M84 195h1M101 195h1M136 195h1M462 195h1M464 195h1M497 195h1M512 195h3M563 195h1M35 196h1M66 196h2M84 196h1M100 196h1M135 196h1M498 196h1M510 196h2M514 196h1M563 196h1M34 197h1M68 197h2M83 197h1M100 197h1M134 197h1M464 197h1M498 197h1M508 197h2M515 197h1M564 197h1M34 198h1M70 198h3M83 198h1M99 198h1M134 198h1M464 198h1M499 198h1M506 198h2M515 198h1M564 198h1M33 199h1M73 199h2M82 199h1M99 199h1M133 199h1M465 199h1M499 199h1M504 199h2M516 199h1M565 199h1M33 200h1M75 200h2M82 200h1M98 200h1M132 200h1M466 200h1M500 200h1M502 200h2M516 200h1M565 200h1M32 201h1M77 201h2M81 201h1M98 201h1M132 201h1M466 201h1M500 201h2M517 201h1M566 201h1M32 202h1M79 202h4M97 202h1M131 202h1M162 202h1M467 202h1M501 202h1M517 202h1M566 202h1M32 203h1M80 203h1M83 203h2M97 203h1M130 203h1M163 203h2M468 203h1M501 203h1M518 203h1M566 203h1M31 204h1M80 204h1M85 204h2M96 204h1M130 204h1M165 204h1M468 204h1M502 204h1M518 204h1M567 204h1M31 205h1M79 205h1M87 205h2M96 205h1M129 205h1M166 205h1M469 205h1M502 205h1M519 205h1M567 205h1M31 206h1M79 206h1M89 206h2M95 206h1M129 206h1M167 206h2M469 206h1M503 206h1M519 206h1M567 206h1M30 207h1M78 207h1M91 207h2M95 207h1M128 207h1M169 207h1M470 207h1M503 207h1M520 207h1M568 207h1M30 208h1M78 208h1M93 208h2M128 208h1M170 208h2M470 208h1M504 208h1M520 208h1M568 208h1M30 209h1M77 209h1M94 209h1M127 209h1M172 209h1M471 209h1M504 209h1M521 209h1M568 209h1M30 210h1M77 210h1M93 210h1M127 210h1M471 210h1M505 210h1M521 210h1M568 210h1M29 211h1M77 211h1M93 211h3M126 211h1M472 211h1M505 211h1M521 211h1M569 211h1M29 212h1M76 212h1M92 212h1M96 212h2M126 212h1M472 212h1M506 212h1M522 212h1M569 212h1M29 213h1M76 213h1M92 213h1M98 213h2M125 213h1M473 213h1M506 213h1M522 213h1M569 213h1M28 214h1M75 214h1M91 214h1M100 214h3M125 214h1M473 214h1M507 214h1M521 214h3M570 214h1M28 215h1M75 215h1M91 215h1M103 215h2M124 215h1M474 215h1M507 215h1M519 215h2M523 215h1M570 215h1M28 216h1M75 216h1M91 216h1M105 216h2M124 216h1M474 216h1M507 216h1M516 216h3M523 216h1M570 216h1M27 217h1M74 217h1M90 217h1M107 217h3M123 217h1M475 217h1M508 217h1M513 217h3M524 217h1M571 217h1M27 218h1M74 218h1M90 218h1M110 218h2M123 218h1M475 218h1M508 218h1M511 218h2M524 218h1M571 218h1M27 219h1M74 219h1M90 219h1M112 219h3M122 219h1M476 219h1M508 219h3M524 219h1M571 219h1M26 220h1M73 220h1M90 220h1M115 220h2M122 220h1M476 220h1M508 220h1M525 220h1M572 220h1M26 221h1M73 221h1M89 221h1M117 221h2M122 221h1M476 221h1M509 221h1M525 221h1M572 221h1M26 222h1M73 222h2M89 222h1M119 222h2M477 222h1M509 222h1M525 222h1M572 222h1M25 223h1M73 223h1M75 223h3M89 223h1M121 223h1M477 223h1M509 223h1M525 223h1M573 223h1M25 224h1M72 224h1M78 224h4M89 224h1M120 224h1M478 224h1M509 224h1M526 224h1M573 224h1M25 225h1M72 225h1M82 225h3M88 225h1M120 225h1M478 225h1M510 225h1M526 225h1M573 225h1M24 226h1M72 226h1M85 226h2M88 226h1M119 226h1M479 226h1M510 226h1M526 226h1M574 226h1M24 227h1M71 227h1M87 227h1M119 227h1M479 227h1M511 227h1M527 227h1M574 227h1M24 228h1M71 228h1M87 228h1M119 228h1M479 228h1M511 228h1M527 228h1M574 228h1M24 229h1M70 229h1M86 229h1M118 229h1M480 229h1M512 229h1M528 229h1M574 229h1M23 230h1M70 230h1M86 230h1M118 230h1M480 230h1M512 230h1M528 230h1M575 230h1M23 231h1M70 231h1M86 231h1M118 231h1M480 231h1M512 231h1M528 231h1M575 231h1M23 232h1M69 232h1M85 232h1M117 232h1M481 232h1M513 232h1M529 232h1M575 232h1M23 233h1M69 233h1M85 233h1M117 233h1M481 233h1M513 233h1M527 233h3M575 233h1M22 234h1M69 234h1M85 234h1M117 234h1M481 234h1M513 234h1M524 234h3M529 234h1M576 234h1M22 235h1M69 235h1M85 235h1M116 235h1M482 235h1M513 235h1M520 235h4M529 235h1M576 235h1M22 236h1M68 236h1M84 236h1M116 236h1M482 236h1M514 236h1M517 236h3M530 236h1M576 236h1M22 237h1M68 237h1M84 237h1M116 237h1M482 237h1M514 237h3M530 237h1M576 237h1M21 238h1M68 238h1M84 238h1M115 238h1M483 238h1M514 238h1M530 238h1M577 238h1M21 239h1M68 239h1M84 239h1M115 239h1M483 239h1M514 239h1M530 239h1M577 239h1M21 240h1M67 240h1M83 240h1M115 240h1M483 240h1M515 240h1M531 240h1M577 240h1M21 241h1M67 241h1M83 241h1M114 241h1M484 241h1M515 241h1M531 241h1M577 241h1M21 242h1M67 242h4M83 242h1M114 242h1M484 242h1M515 242h1M531 242h1M577 242h1M20 243h1M67 243h1M71 243h4M83 243h1M114 243h1M484 243h1M515 243h1M531 243h1M578 243h1M20 244h1M66 244h1M75 244h4M82 244h1M114 244h1M484 244h1M516 244h1M532 244h1M578 244h1M20 245h1M66 245h1M79 245h4M113 245h1M485 245h1M516 245h1M532 245h1M578 245h1M20 246h1M66 246h1M82 246h1M113 246h1M485 246h1M516 246h1M532 246h1M578 246h1M20 247h1M66 247h1M81 247h1M113 247h1M485 247h1M517 247h1M532 247h1M578 247h1M19 248h1M65 248h1M81 248h1M112 248h1M486 248h1M517 248h1M533 248h1M579 248h1M19 249h1M65 249h1M81 249h1M112 249h1M486 249h1M517 249h1M533 249h1M579 249h1M19 250h1M65 250h1M81 250h1M112 250h1M486 250h1M517 250h1M533 250h1M579 250h1M19 251h1M65 251h1M80 251h1M111 251h1M487 251h1M518 251h1M533 251h1M579 251h1M19 252h1M65 252h1M80 252h1M111 252h1M487 252h1M518 252h1M533 252h1M579 252h1M19 253h1M65 253h1M80 253h1M111 253h1M487 253h1M518 253h1M533 253h1M579 253h1M19 254h1M64 254h1M80 254h1M110 254h1M488 254h1M518 254h1M530 254h5M579 254h1M18 255h1M64 255h1M79 255h1M110 255h1M488 255h1M519 255h1M524 255h6M534 255h1M580 255h1M18 256h1M64 256h1M79 256h1M110 256h1M488 256h1M519 256h5M534 256h1M580 256h1M18 257h1M64 257h1M79 257h1M110 257h1M488 257h1M519 257h1M534 257h1M580 257h1M18 258h1M64 258h1M79 258h1M109 258h1M489 258h1M519 258h1M534 258h1M580 258h1M18 259h1M64 259h1M78 259h1M109 259h1M489 259h1M520 259h1M534 259h1M580 259h1M18 260h1M63 260h1M78 260h1M109 260h1M489 260h1M520 260h1M535 260h1M580 260h1M18 261h1M63 261h1M78 261h1M109 261h1M489 261h1M520 261h1M535 261h1M580 261h1M18 262h1M63 262h4M78 262h1M109 262h1M489 262h1M520 262h1M535 262h1M580 262h1M18 263h1M63 263h1M67 263h7M78 263h1M108 263h1M490 263h1M520 263h1M535 263h1M580 263h1M18 264h1M62 264h1M74 264h5M108 264h1M490 264h1M520 264h1M536 264h1M580 264h1M17 265h1M62 265h1M77 265h1M108 265h1M490 265h1M521 265h1M536 265h1M581 265h1M17 266h1M62 266h1M77 266h1M108 266h1M490 266h1M521 266h1M536 266h1M581 266h1M17 267h1M62 267h1M77 267h1M108 267h1M490 267h1M521 267h1M536 267h1M581 267h1M17 268h1M62 268h1M77 268h1M108 268h1M490 268h1M521 268h1M536 268h1M581 268h1M17 269h1M62 269h1M77 269h1M107 269h1M491 269h1M521 269h1M536 269h1M581 269h1M17 270h1M61 270h1M77 270h1M107 270h1M491 270h1M521 270h1M537 270h1M576 270h6M17 271h1M61 271h1M77 271h1M107 271h1M491 271h1M521 271h1M537 271h1M565 271h11M581 271h1M17 272h1M61 272h1M76 272h1M107 272h1M491 272h1M522 272h1M537 272h1M554 272h11M581 272h1M17 273h1M61 273h1M76 273h1M107 273h1M491 273h1M522 273h1M537 273h1M543 273h11M581 273h1M17 274h1M61 274h1M76 274h1M107 274h1M491 274h1M522 274h1M533 274h10M581 274h1M16 275h1M61 275h1M76 275h1M107 275h1M491 275h1M522 275h1M527 275h6M537 275h1M582 275h1M16 276h1M61 276h1M76 276h1M106 276h1M492 276h1M522 276h5M537 276h1M582 276h1M16 277h1M61 277h1M76 277h1M106 277h1M492 277h1M522 277h1M537 277h1M582 277h1M16 278h1M61 278h1M76 278h1M106 278h1M492 278h1M522 278h1M537 278h1M582 278h1M16 279h1M61 279h1M76 279h1M106 279h1M492 279h1M522 279h1M537 279h1M582 279h1M16 280h1M61 280h1M76 280h1M106 280h1M492 280h1M522 280h1M537 280h1M582 280h1M16 281h1M61 281h1M76 281h1M106 281h1M492 281h1M522 281h1M537 281h1M582 281h1M16 282h1M61 282h1M76 282h1M106 282h1M132 282h1M492 282h1M522 282h1M537 282h1M582 282h1M16 283h1M61 283h7M76 283h1M105 283h1M133 283h1M493 283h1M522 283h1M537 283h1M582 283h1M16 284h1M61 284h1M68 284h9M105 284h1M134 284h1M493 284h1M522 284h1M537 284h1M582 284h1M15 285h1M61 285h1M76 285h1M105 285h1M135 285h1M493 285h1M522 285h1M537 285h1M583 285h1M15 286h1M61 286h1M76 286h1M105 286h1M136 286h1M493 286h1M522 286h1M537 286h1M583 286h1M15 287h1M60 287h1M76 287h1M105 287h1M137 287h1M493 287h1M522 287h1M538 287h1M583 287h1M15 288h1M60 288h1M75 288h1M105 288h1M138 288h1M493 288h1M523 288h1M538 288h1M583 288h1M15 289h1M60 289h1M75 289h1M105 289h1M138 289h1M493 289h1M523 289h1M538 289h1M583 289h1M15 290h1M60 290h1M75 290h1M105 290h1M139 290h1M493 290h1M523 290h1M538 290h1M583 290h1M15 291h1M60 291h1M75 291h1M105 291h1M140 291h1M493 291h1M523 291h1M538 291h1M583 291h1M15 292h1M60 292h1M75 292h1M105 292h1M141 292h1M493 292h1M523 292h1M538 292h1M583 292h1M15 293h1M60 293h1M75 293h1M105 293h1M142 293h1M493 293h1M523 293h1M538 293h1M583 293h1M15 294h1M60 294h1M75 294h1M105 294h1M143 294h1M493 294h1M523 294h1M538 294h1M583 294h1M15 295h1M60 295h1M75 295h1M105 295h1M493 295h1M523 295h16M583 295h1M15 296h1M60 296h1M75 296h1M105 296h1M493 296h1M523 296h1M538 296h1M583 296h1M15 297h1M60 297h1M75 297h1M105 297h1M493 297h1M523 297h1M538 297h1M583 297h1M15 298h1M60 298h1M75 298h1M105 298h1M493 298h1M523 298h1M538 298h1M583 298h1M15 299h1M60 299h1M75 299h31M131 299h13M493 299h31M538 299h1M583 299h1M15 300h1M60 300h1M75 300h1M105 300h1M493 300h1M523 300h1M538 300h1M583 300h1M15 301h1M60 301h1M75 301h1M105 301h1M493 301h1M523 301h1M538 301h1M583 301h1M15 302h1M60 302h1M75 302h1M105 302h1M493 302h1M523 302h1M538 302h1M583 302h1M15 303h1M60 303h16M105 303h1M493 303h1M523 303h1M538 303h1M583 303h1M15 304h1M60 304h1M75 304h1M105 304h1M493 304h1M523 304h1M538 304h1M583 304h1M15 305h1M60 305h1M75 305h1M105 305h1M143 305h1M493 305h1M523 305h1M538 305h1M583 305h1M15 306h1M60 306h1M75 306h1M105 306h1M142 306h1M493 306h1M523 306h1M538 306h1M583 306h1M15 307h1M60 307h1M75 307h1M105 307h1M141 307h1M493 307h1M523 307h1M538 307h1M583 307h1M15 308h1M60 308h1M75 308h1M105 308h1M140 308h1M493 308h1M523 308h1M538 308h1M583 308h1M15 309h1M60 309h1M75 309h1M105 309h1M139 309h1M493 309h1M523 309h1M538 309h1M583 309h1M15 310h1M60 310h1M76 310h1M105 310h1M138 310h1M493 310h1M522 310h1M538 310h1M583 310h1M15 311h1M61 311h1M76 311h1M105 311h1M137 311h1M493 311h1M522 311h1M537 311h1M583 311h1M15 312h1M61 312h1M76 312h1M105 312h1M137 312h1M493 312h1M522 312h1M537 312h1M583 312h1M16 313h1M61 313h1M76 313h1M105 313h1M136 313h1M493 313h1M522 313h1M537 313h1M582 313h1M16 314h1M61 314h1M76 314h1M105 314h1M135 314h1M493 314h1M522 314h8M537 314h1M582 314h1M16 315h1M61 315h1M76 315h1M105 315h1M134 315h1M493 315h1M522 315h1M530 315h8M582 315h1M16 316h1M61 316h1M76 316h1M106 316h1M133 316h1M492 316h1M522 316h1M537 316h1M582 316h1M16 317h1M61 317h1M76 317h1M106 317h1M132 317h1M492 317h1M522 317h1M537 317h1M582 317h1M16 318h1M61 318h1M76 318h1M106 318h1M492 318h1M522 318h1M537 318h1M582 318h1M16 319h1M61 319h1M76 319h1M106 319h1M492 319h1M522 319h1M537 319h1M582 319h1M16 320h1M61 320h1M76 320h1M106 320h1M492 320h1M522 320h1M537 320h1M582 320h1M16 321h1M61 321h1M76 321h1M106 321h1M492 321h1M522 321h1M537 321h1M582 321h1M16 322h1M61 322h1M72 322h5M106 322h1M492 322h1M522 322h1M537 322h1M582 322h1M17 323h1M61 323h1M66 323h6M76 323h1M107 323h1M491 323h1M522 323h1M537 323h1M581 323h1M17 324h1M56 324h10M76 324h1M107 324h1M491 324h1M522 324h1M537 324h1M581 324h1M17 325h1M45 325h11M61 325h1M76 325h1M107 325h1M491 325h1M522 325h1M537 325h1M581 325h1M17 326h1M34 326h11M61 326h1M77 326h1M107 326h1M491 326h1M521 326h1M537 326h1M581 326h1M17 327h1M23 327h11M61 327h1M77 327h1M107 327h1M491 327h1M521 327h1M537 327h1M581 327h1M17 328h6M62 328h1M77 328h1M107 328h1M491 328h1M521 328h1M536 328h1M581 328h1M17 329h1M62 329h1M77 329h1M108 329h1M490 329h1M521 329h1M536 329h1M581 329h1M17 330h1M62 330h1M77 330h1M108 330h1M490 330h1M521 330h1M536 330h1M581 330h1M17 331h1M62 331h1M77 331h1M108 331h1M490 331h1M521 331h1M536 331h1M581 331h1M17 332h1M62 332h1M77 332h1M108 332h1M490 332h1M521 332h1M536 332h1M581 332h1M18 333h1M62 333h1M77 333h1M108 333h1M490 333h1M521 333h1M536 333h1M580 333h1M18 334h1M63 334h1M78 334h1M108 334h1M490 334h1M520 334h5M535 334h1M580 334h1M18 335h1M63 335h1M78 335h1M108 335h1M490 335h1M520 335h1M525 335h7M535 335h1M580 335h1M18 336h1M63 336h1M78 336h1M109 336h1M489 336h1M520 336h1M532 336h4M580 336h1M18 337h1M63 337h1M78 337h1M109 337h1M489 337h1M520 337h1M535 337h1M580 337h1M18 338h1M64 338h1M78 338h1M109 338h1M489 338h1M520 338h1M534 338h1M580 338h1M18 339h1M64 339h1M79 339h1M109 339h1M489 339h1M519 339h1M534 339h1M580 339h1M18 340h1M64 340h1M79 340h1M109 340h1M489 340h1M519 340h1M534 340h1M580 340h1M18 341h1M64 341h1M79 341h1M110 341h1M488 341h1M519 341h1M534 341h1M580 341h1M18 342h1M64 342h1M75 342h5M110 342h1M488 342h1M519 342h1M534 342h1M580 342h1M19 343h1M64 343h1M69 343h6M80 343h1M110 343h1M488 343h1M518 343h1M534 343h1M579 343h1M19 344h1M65 344h4M80 344h1M110 344h1M488 344h1M518 344h1M533 344h1M579 344h1M19 345h1M65 345h1M80 345h1M111 345h1M487 345h1M518 345h1M533 345h1M579 345h1M19 346h1M65 346h1M80 346h1M111 346h1M487 346h1M518 346h1M533 346h1M579 346h1M19 347h1M65 347h1M81 347h1M111 347h1M487 347h1M517 347h1M533 347h1M579 347h1M19 348h1M65 348h1M81 348h1M112 348h1M486 348h1M517 348h1M533 348h1M579 348h1M19 349h1M65 349h1M81 349h1M112 349h1M486 349h1M517 349h1M533 349h1M579 349h1M19 350h1M66 350h1M81 350h1M112 350h1M486 350h1M517 350h1M532 350h1M579 350h1M20 351h1M66 351h1M82 351h1M113 351h1M485 351h1M516 351h1M532 351h1M578 351h1M20 352h1M66 352h1M82 352h1M113 352h1M485 352h1M516 352h1M532 352h1M578 352h1M20 353h1M66 353h1M82 353h1M113 353h1M485 353h1M516 353h4M532 353h1M578 353h1M20 354h1M67 354h1M82 354h1M114 354h1M484 354h1M516 354h1M520 354h4M531 354h1M578 354h1M20 355h1M67 355h1M83 355h1M114 355h1M484 355h1M515 355h1M524 355h4M531 355h1M578 355h1M21 356h1M67 356h1M83 356h1M114 356h1M444 356h2M484 356h1M515 356h1M528 356h4M577 356h1M21 357h1M67 357h1M83 357h1M114 357h1M446 357h3M484 357h1M515 357h1M531 357h1M577 357h1M21 358h1M67 358h1M83 358h1M115 358h1M449 358h2M483 358h1M515 358h1M531 358h1M577 358h1M21 359h1M68 359h1M84 359h1M115 359h1M451 359h3M483 359h1M514 359h1M530 359h1M577 359h1M21 360h1M68 360h1M84 360h1M115 360h1M454 360h2M483 360h1M514 360h1M530 360h1M577 360h1M22 361h1M68 361h1M82 361h3M116 361h1M482 361h1M514 361h1M530 361h1M576 361h1M22 362h1M68 362h1M79 362h3M85 362h1M116 362h1M482 362h1M513 362h1M530 362h1M576 362h1M22 363h1M69 363h1M75 363h4M85 363h1M116 363h1M482 363h1M513 363h1M529 363h1M576 363h1M22 364h1M69 364h1M72 364h3M85 364h1M117 364h1M481 364h1M513 364h1M529 364h1M576 364h1M23 365h1M69 365h3M85 365h1M117 365h1M481 365h1M513 365h1M529 365h1M575 365h1M23 366h1M69 366h1M86 366h1M117 366h1M481 366h1M512 366h1M529 366h1M575 366h1M23 367h1M70 367h1M86 367h1M118 367h1M480 367h1M512 367h1M528 367h1M575 367h1M23 368h1M70 368h1M86 368h1M118 368h1M480 368h1M512 368h1M528 368h1M575 368h1M24 369h1M71 369h1M86 369h1M118 369h1M480 369h1M512 369h1M527 369h1M574 369h1M24 370h1M71 370h1M87 370h1M119 370h1M479 370h1M511 370h1M527 370h1M574 370h1M24 371h1M71 371h1M87 371h1M119 371h1M479 371h1M511 371h1M527 371h1M574 371h1M25 372h1M72 372h1M88 372h1M119 372h1M479 372h1M510 372h1M512 372h2M526 372h1M573 372h1M25 373h1M72 373h1M88 373h1M120 373h1M162 373h1M478 373h1M510 373h1M514 373h3M526 373h1M573 373h1M25 374h1M72 374h1M89 374h1M120 374h1M160 374h2M478 374h1M509 374h1M517 374h4M526 374h1M573 374h1M25 375h1M73 375h1M89 375h1M121 375h1M158 375h2M477 375h1M509 375h1M521 375h3M525 375h1M573 375h1M26 376h1M73 376h1M89 376h1M121 376h1M157 376h1M478 376h2M509 376h1M524 376h2M572 376h1M26 377h1M73 377h1M90 377h1M122 377h1M155 377h2M476 377h1M480 377h2M508 377h1M525 377h1M572 377h1M26 378h1M73 378h1M90 378h1M122 378h1M153 378h2M476 378h1M482 378h2M508 378h1M525 378h1M572 378h1M27 379h1M74 379h1M88 379h3M123 379h1M152 379h1M475 379h1M484 379h3M508 379h1M524 379h1M571 379h1M27 380h1M74 380h1M86 380h2M90 380h1M123 380h1M475 380h1M487 380h2M508 380h1M524 380h1M571 380h1M27 381h1M74 381h1M83 381h3M91 381h1M124 381h1M474 381h1M489 381h2M507 381h1M524 381h1M571 381h1M28 382h1M75 382h1M80 382h3M91 382h1M124 382h1M474 382h1M491 382h3M507 382h1M523 382h1M570 382h1M28 383h1M75 383h1M78 383h2M91 383h1M125 383h1M473 383h1M494 383h2M507 383h1M523 383h1M570 383h1M28 384h1M76 384h2M91 384h1M125 384h1M473 384h1M496 384h3M507 384h1M522 384h1M570 384h1M29 385h1M76 385h1M92 385h1M126 385h1M472 385h1M499 385h2M506 385h1M522 385h1M569 385h1M29 386h1M76 386h1M92 386h1M126 386h1M472 386h1M501 386h2M506 386h1M522 386h1M569 386h1M29 387h1M77 387h1M93 387h1M127 387h1M471 387h1M503 387h3M521 387h1M569 387h1M30 388h1M77 388h1M93 388h1M127 388h1M471 388h1M505 388h1M521 388h1M568 388h1M30 389h1M78 389h1M94 389h1M128 389h1M470 389h1M504 389h1M520 389h1M568 389h1M30 390h1M78 390h1M94 390h1M128 390h1M470 390h1M504 390h2M520 390h1M568 390h1M31 391h1M79 391h1M95 391h1M129 391h1M469 391h1M503 391h1M506 391h2M519 391h1M567 391h1M31 392h1M79 392h1M95 392h1M129 392h1M469 392h1M503 392h1M508 392h2M519 392h1M567 392h1M31 393h1M80 393h1M96 393h1M130 393h1M468 393h1M502 393h1M510 393h2M518 393h1M567 393h1M31 394h1M80 394h1M96 394h1M130 394h1M468 394h1M502 394h1M512 394h2M518 394h1M567 394h1M32 395h1M81 395h1M97 395h1M131 395h1M467 395h1M501 395h1M514 395h2M517 395h1M566 395h1M32 396h1M81 396h1M97 396h1M131 396h1M467 396h1M501 396h1M516 396h4M566 396h1M32 397h1M81 397h1M96 397h3M132 397h1M466 397h1M500 397h1M517 397h1M520 397h2M566 397h1M33 398h1M82 398h1M94 398h2M98 398h1M132 398h1M466 398h1M500 398h1M516 398h1M522 398h2M565 398h1M33 399h1M82 399h1M92 399h2M99 399h1M133 399h1M465 399h1M499 399h1M516 399h1M524 399h2M565 399h1M34 400h1M83 400h1M90 400h2M99 400h1M134 400h1M464 400h1M499 400h1M515 400h1M526 400h2M564 400h1M34 401h1M83 401h1M88 401h2M100 401h1M134 401h1M464 401h1M498 401h1M515 401h1M528 401h3M564 401h1M35 402h1M84 402h1M86 402h2M100 402h1M463 402h1M498 402h1M514 402h1M531 402h2M563 402h1M35 403h1M84 403h2M101 403h1M134 403h1M136 403h1M462 403h1M497 403h1M514 403h1M533 403h2M563 403h1M36 404h1M85 404h1M101 404h1M132 404h2M136 404h1M462 404h1M497 404h1M513 404h1M535 404h2M562 404h1M36 405h1M85 405h1M102 405h1M130 405h2M137 405h1M461 405h1M496 405h1M513 405h1M537 405h3M562 405h1M36 406h1M86 406h1M102 406h1M129 406h1M137 406h1M461 406h1M496 406h1M512 406h1M540 406h2M562 406h1M37 407h1M86 407h1M103 407h1M127 407h2M138 407h1M460 407h1M495 407h1M512 407h1M542 407h2M561 407h1M37 408h1M87 408h1M103 408h1M126 408h1M139 408h1M459 408h1M495 408h2M511 408h1M544 408h2M561 408h1M38 409h1M87 409h1M104 409h1M124 409h2M139 409h1M459 409h1M494 409h1M497 409h2M511 409h1M546 409h2M560 409h1M38 410h1M88 410h1M104 410h1M122 410h2M140 410h1M458 410h1M494 410h1M499 410h2M510 410h1M548 410h3M560 410h1M39 411h1M88 411h1M105 411h1M121 411h1M141 411h1M457 411h1M493 411h1M501 411h2M510 411h1M551 411h2M559 411h1M39 412h1M89 412h1M106 412h1M119 412h2M141 412h1M457 412h1M492 412h1M503 412h2M509 412h1M553 412h2M559 412h1M40 413h1M89 413h1M106 413h1M118 413h1M142 413h1M456 413h1M492 413h1M505 413h2M509 413h1M555 413h2M558 413h1M40 414h1M90 414h1M107 414h1M116 414h2M143 414h1M455 414h1M491 414h1M507 414h2M557 414h2M40 415h1M90 415h1M106 415h1M108 415h1M114 415h2M144 415h1M454 415h1M490 415h1M508 415h1M558 415h1M41 416h1M91 416h1M104 416h2M108 416h1M113 416h1M144 416h1M454 416h1M490 416h1M507 416h1M557 416h1M41 417h1M91 417h1M103 417h1M109 417h1M111 417h2M145 417h1M453 417h1M489 417h1M507 417h1M557 417h1M42 418h1M92 418h1M101 418h2M110 418h1M146 418h1M452 418h1M488 418h1M506 418h1M556 418h1M42 419h1M93 419h1M99 419h2M110 419h1M147 419h1M451 419h1M488 419h1M505 419h1M556 419h1M43 420h1M93 420h1M98 420h1M111 420h1M148 420h1M450 420h1M487 420h1M505 420h1M555 420h1M43 421h1M94 421h1M96 421h2M111 421h1M149 421h1M449 421h1M487 421h1M504 421h1M555 421h1M44 422h1M94 422h2M112 422h1M149 422h1M449 422h1M486 422h1M504 422h1M554 422h1M44 423h1M95 423h1M112 423h1M150 423h1M448 423h1M486 423h1M503 423h1M554 423h1M44 424h1M95 424h1M113 424h1M151 424h1M447 424h1M485 424h1M503 424h1M554 424h1M45 425h1M96 425h1M114 425h1M152 425h1M208 425h1M446 425h1M484 425h1M486 425h2M502 425h1M553 425h1M45 426h1M97 426h1M115 426h1M153 426h1M207 426h1M445 426h1M483 426h1M488 426h1M501 426h1M553 426h1M46 427h1M97 427h1M116 427h1M153 427h1M207 427h1M445 427h1M482 427h1M489 427h2M501 427h1M552 427h1M46 428h1M98 428h1M116 428h1M154 428h1M206 428h1M444 428h1M482 428h1M491 428h1M500 428h1M552 428h1M47 429h1M99 429h1M117 429h1M155 429h1M205 429h1M443 429h1M481 429h1M492 429h2M499 429h1M551 429h1M47 430h1M100 430h1M118 430h1M156 430h1M204 430h1M442 430h1M480 430h1M494 430h1M498 430h1M551 430h1M48 431h1M100 431h1M117 431h1M119 431h1M157 431h1M204 431h1M441 431h1M479 431h1M495 431h2M498 431h1M550 431h1M48 432h1M101 432h1M115 432h2M119 432h1M158 432h1M203 432h1M440 432h1M479 432h1M497 432h1M550 432h1M49 433h1M102 433h1M114 433h1M120 433h1M159 433h1M202 433h1M439 433h1M478 433h1M496 433h1M549 433h1M49 434h1M102 434h1M113 434h1M121 434h1M160 434h1M202 434h1M438 434h1M477 434h1M496 434h1M549 434h1M50 435h1M103 435h1M111 435h2M122 435h1M161 435h1M201 435h1M437 435h1M476 435h1M495 435h1M548 435h1M50 436h1M104 436h1M110 436h1M122 436h1M162 436h1M436 436h1M476 436h1M494 436h1M548 436h1M51 437h1M105 437h1M109 437h1M123 437h1M163 437h1M435 437h1M475 437h1M493 437h1M547 437h1M51 438h1M105 438h1M107 438h2M124 438h1M164 438h1M434 438h1M474 438h1M493 438h1M547 438h1M52 439h1M106 439h1M125 439h1M165 439h1M433 439h1M473 439h1M492 439h1M546 439h1M52 440h1M105 440h1M107 440h1M126 440h1M166 440h1M432 440h1M472 440h1M474 440h1M491 440h1M546 440h1M53 441h1M103 441h2M107 441h1M126 441h1M167 441h1M431 441h1M472 441h1M475 441h1M491 441h1M545 441h1M54 442h1M102 442h1M108 442h1M127 442h1M168 442h1M430 442h1M471 442h1M476 442h1M490 442h1M544 442h1M54 443h1M101 443h1M109 443h1M128 443h1M169 443h1M429 443h1M470 443h1M477 443h1M489 443h1M544 443h1M55 444h1M99 444h2M110 444h1M129 444h1M170 444h1M428 444h1M469 444h1M478 444h1M488 444h1M543 444h1M56 445h1M98 445h1M110 445h1M130 445h1M171 445h2M246 445h1M426 445h2M468 445h1M479 445h2M488 445h1M542 445h1M56 446h1M96 446h2M111 446h1M130 446h2M173 446h1M246 446h1M425 446h1M428 446h1M467 446h1M481 446h1M487 446h1M542 446h1M57 447h1M95 447h1M112 447h1M129 447h1M131 447h1M174 447h1M245 447h1M424 447h1M429 447h1M467 447h1M482 447h1M486 447h1M541 447h1M57 448h1M94 448h1M113 448h1M127 448h2M132 448h1M175 448h1M245 448h1M423 448h1M430 448h1M466 448h1M483 448h1M485 448h1M541 448h1M58 449h1M92 449h2M114 449h1M126 449h1M133 449h1M176 449h1M245 449h1M421 449h2M430 449h1M465 449h1M484 449h1M540 449h1M59 450h1M91 450h1M114 450h1M125 450h1M134 450h1M177 450h2M244 450h1M263 450h1M420 450h1M431 450h1M464 450h1M484 450h1M539 450h1M59 451h1M89 451h2M115 451h1M124 451h1M135 451h1M179 451h1M244 451h1M263 451h1M419 451h1M432 451h1M463 451h1M483 451h1M539 451h1M60 452h1M88 452h1M116 452h1M123 452h1M136 452h1M180 452h1M244 452h1M262 452h1M418 452h1M433 452h1M462 452h1M482 452h1M538 452h1M61 453h1M87 453h1M117 453h1M121 453h2M137 453h1M181 453h1M243 453h1M262 453h1M417 453h1M434 453h1M461 453h1M481 453h1M537 453h1M61 454h1M85 454h2M118 454h1M120 454h1M138 454h1M182 454h2M243 454h1M262 454h1M415 454h2M435 454h1M460 454h1M480 454h1M537 454h1M62 455h1M84 455h1M119 455h1M139 455h1M184 455h1M243 455h1M262 455h1M294 455h1M414 455h1M436 455h1M459 455h1M461 455h1M479 455h1M536 455h1M63 456h1M82 456h2M119 456h1M140 456h1M185 456h1M242 456h1M261 456h1M294 456h1M413 456h1M437 456h1M458 456h1M462 456h1M479 456h1M535 456h1M63 457h1M81 457h1M120 457h1M141 457h1M186 457h2M242 457h1M261 457h1M294 457h1M411 457h2M437 457h1M457 457h1M463 457h1M478 457h1M535 457h1M64 458h1M80 458h1M121 458h1M142 458h1M188 458h1M261 458h1M294 458h1M410 458h1M438 458h1M456 458h1M464 458h1M477 458h1M534 458h1M65 459h1M78 459h2M122 459h1M143 459h1M189 459h2M261 459h1M294 459h1M408 459h2M439 459h1M455 459h1M465 459h1M476 459h1M533 459h1M65 460h1M77 460h1M123 460h1M144 460h1M191 460h1M260 460h1M294 460h1M407 460h1M440 460h1M454 460h1M466 460h2M475 460h1M533 460h1M66 461h1M75 461h2M124 461h1M143 461h1M145 461h1M192 461h2M260 461h1M294 461h1M405 461h2M441 461h1M453 461h1M468 461h1M474 461h1M532 461h1M67 462h1M74 462h1M125 462h1M142 462h1M146 462h1M194 462h2M260 462h1M294 462h1M403 462h2M442 462h1M452 462h1M469 462h1M473 462h1M531 462h1M67 463h1M73 463h1M125 463h1M141 463h1M147 463h1M196 463h1M294 463h1M402 463h1M443 463h1M451 463h1M470 463h1M473 463h1M531 463h1M68 464h1M71 464h2M126 464h1M140 464h1M148 464h1M197 464h2M294 464h1M400 464h2M443 464h1M450 464h1M471 464h2M530 464h1M68 465h1M70 465h1M127 465h1M139 465h1M149 465h1M199 465h1M294 465h1M399 465h1M444 465h1M449 465h1M471 465h1M530 465h1M69 466h1M128 466h1M138 466h1M150 466h1M200 466h2M294 466h1M397 466h2M445 466h1M448 466h1M470 466h1M529 466h1M70 467h1M129 467h1M138 467h1M151 467h1M202 467h1M294 467h1M395 467h2M446 467h2M469 467h1M528 467h1M71 468h1M130 468h1M137 468h1M152 468h2M203 468h2M393 468h2M445 468h2M468 468h1M527 468h1M71 469h1M131 469h1M136 469h1M154 469h1M205 469h2M391 469h2M444 469h1M447 469h1M467 469h1M527 469h1M72 470h1M132 470h1M135 470h1M155 470h1M207 470h2M389 470h2M443 470h1M448 470h1M466 470h1M526 470h1M73 471h1M133 471h2M156 471h1M209 471h2M387 471h2M442 471h1M448 471h1M465 471h1M525 471h1M74 472h1M134 472h1M157 472h1M211 472h2M385 472h2M440 472h2M449 472h1M464 472h1M524 472h1M74 473h1M135 473h1M158 473h2M213 473h2M383 473h2M439 473h1M450 473h1M462 473h2M524 473h1M75 474h1M136 474h2M158 474h1M160 474h1M215 474h2M381 474h2M438 474h1M451 474h1M461 474h1M523 474h1M76 475h1M138 475h1M157 475h1M161 475h1M217 475h2M379 475h2M437 475h1M452 475h1M460 475h1M522 475h1M77 476h1M139 476h1M156 476h1M162 476h2M219 476h3M377 476h2M435 476h2M453 476h1M459 476h1M521 476h1M78 477h1M140 477h1M155 477h1M164 477h1M222 477h2M375 477h2M434 477h1M453 477h1M458 477h1M520 477h1M79 478h1M141 478h1M154 478h1M165 478h1M224 478h2M373 478h2M433 478h1M454 478h1M457 478h1M519 478h1M80 479h1M142 479h2M153 479h1M166 479h2M224 479h1M226 479h3M370 479h3M431 479h2M455 479h2M518 479h1M81 480h1M144 480h1M153 480h1M168 480h1M224 480h1M229 480h3M367 480h3M430 480h1M454 480h1M517 480h1M82 481h1M145 481h1M152 481h1M169 481h1M223 481h1M232 481h3M364 481h3M429 481h1M431 481h1M453 481h1M516 481h1M83 482h1M146 482h1M151 482h1M170 482h1M223 482h1M235 482h3M361 482h3M427 482h2M432 482h1M452 482h1M515 482h1M84 483h1M147 483h1M150 483h1M171 483h2M222 483h1M238 483h3M358 483h3M426 483h1M432 483h1M451 483h1M514 483h1M84 484h1M148 484h2M173 484h1M222 484h1M241 484h4M354 484h4M425 484h1M433 484h1M449 484h2M514 484h1M85 485h1M149 485h2M174 485h1M221 485h1M245 485h3M351 485h3M424 485h1M434 485h1M448 485h1M513 485h1M86 486h1M151 486h1M173 486h1M175 486h2M221 486h1M248 486h3M348 486h3M422 486h2M435 486h1M447 486h1M512 486h1M87 487h1M152 487h1M173 487h1M177 487h2M221 487h1M251 487h3M345 487h3M420 487h2M435 487h1M446 487h1M511 487h1M87 488h1M153 488h2M172 488h1M179 488h2M220 488h1M254 488h4M341 488h4M418 488h2M436 488h1M444 488h2M511 488h1M88 489h1M155 489h1M171 489h1M181 489h1M220 489h1M258 489h5M336 489h5M417 489h1M437 489h1M443 489h1M510 489h1M89 490h1M156 490h1M171 490h1M182 490h2M219 490h1M263 490h6M329 490h7M337 490h1M415 490h2M438 490h1M442 490h1M509 490h1M90 491h1M157 491h2M170 491h1M184 491h1M219 491h1M269 491h7M323 491h6M337 491h1M414 491h1M438 491h1M440 491h2M508 491h1M91 492h1M159 492h1M169 492h1M185 492h2M218 492h1M276 492h7M316 492h7M337 492h1M412 492h2M415 492h1M439 492h1M507 492h1M92 493h1M160 493h2M169 493h1M187 493h1M218 493h1M283 493h33M338 493h1M411 493h1M416 493h1M437 493h2M440 493h1M506 493h1M93 494h1M162 494h1M168 494h1M188 494h2M218 494h1M338 494h1M409 494h2M416 494h1M436 494h1M441 494h1M505 494h1M94 495h1M163 495h1M167 495h1M190 495h2M217 495h1M338 495h1M407 495h2M417 495h1M435 495h1M441 495h1M504 495h1M95 496h1M164 496h2M167 496h1M190 496h1M192 496h2M217 496h1M338 496h1M405 496h2M418 496h1M433 496h2M442 496h1M503 496h1M96 497h1M166 497h1M189 497h1M194 497h2M216 497h1M339 497h1M403 497h2M418 497h1M432 497h1M443 497h1M502 497h1M97 498h1M167 498h2M189 498h1M196 498h2M216 498h1M339 498h1M401 498h2M419 498h1M430 498h2M444 498h1M501 498h1M98 499h1M169 499h1M188 499h1M198 499h2M216 499h1M339 499h1M399 499h2M419 499h1M429 499h1M444 499h1M500 499h1M99 500h1M170 500h1M188 500h1M200 500h2M215 500h1M339 500h1M397 500h2M420 500h1M428 500h1M445 500h1M499 500h1M100 501h1M171 501h2M187 501h1M202 501h2M215 501h1M339 501h1M395 501h3M421 501h1M426 501h2M446 501h1M498 501h1M101 502h1M173 502h1M187 502h1M204 502h2M214 502h1M340 502h1M393 502h2M398 502h1M421 502h1M425 502h1M446 502h1M497 502h1M102 503h1M174 503h2M186 503h1M206 503h2M214 503h1M340 503h1M391 503h2M398 503h1M422 503h3M447 503h1M496 503h1M103 504h1M176 504h2M186 504h1M208 504h2M213 504h1M340 504h1M389 504h2M399 504h1M421 504h2M448 504h1M495 504h1M104 505h1M178 505h2M185 505h1M208 505h1M210 505h2M213 505h1M340 505h1M387 505h2M399 505h1M419 505h2M449 505h1M494 505h1M105 506h1M180 506h1M185 506h1M207 506h1M212 506h2M340 506h1M385 506h2M400 506h1M418 506h1M449 506h1M493 506h1M106 507h1M181 507h2M184 507h1M207 507h1M214 507h3M341 507h1M381 507h4M400 507h1M416 507h2M450 507h1M492 507h1M107 508h1M183 508h2M206 508h1M217 508h4M341 508h1M377 508h4M401 508h1M414 508h2M451 508h1M491 508h1M108 509h1M185 509h2M206 509h1M221 509h4M341 509h1M374 509h3M379 509h1M401 509h1M412 509h2M451 509h1M490 509h1M109 510h1M187 510h1M205 510h1M225 510h2M341 510h1M372 510h2M379 510h1M402 510h1M410 510h2M452 510h1M489 510h1M110 511h1M188 511h2M205 511h1M227 511h2M342 511h1M370 511h2M380 511h1M402 511h1M408 511h2M453 511h1M487 511h2M111 512h2M190 512h2M204 512h1M226 512h1M229 512h3M342 512h1M366 512h4M380 512h1M403 512h1M406 512h2M454 512h1M486 512h1M113 513h1M192 513h2M204 513h1M226 513h1M232 513h4M342 513h1M362 513h4M381 513h1M403 513h3M454 513h1M485 513h1M114 514h1M194 514h3M203 514h1M225 514h1M236 514h4M342 514h1M359 514h3M381 514h1M402 514h2M455 514h1M483 514h2M115 515h2M197 515h2M203 515h1M225 515h1M240 515h4M342 515h1M355 515h4M361 515h1M381 515h1M400 515h2M456 515h1M482 515h1M117 516h1M199 516h2M202 516h1M225 516h1M244 516h3M343 516h1M351 516h4M361 516h1M382 516h1M398 516h2M456 516h1M481 516h1M118 517h1M201 517h2M224 517h1M245 517h1M247 517h4M343 517h1M347 517h4M362 517h1M382 517h1M395 517h3M457 517h1M480 517h1M119 518h1M202 518h3M224 518h1M245 518h1M251 518h4M343 518h4M362 518h1M382 518h1M393 518h2M458 518h1M479 518h1M120 519h1M202 519h1M205 519h2M224 519h1M245 519h1M255 519h4M339 519h4M362 519h1M383 519h1M391 519h2M459 519h1M478 519h1M121 520h1M201 520h1M207 520h2M224 520h1M244 520h1M259 520h6M334 520h5M342 520h1M363 520h1M383 520h1M389 520h2M459 520h1M477 520h1M122 521h1M201 521h1M209 521h3M223 521h1M244 521h1M264 521h8M326 521h8M342 521h1M363 521h1M384 521h1M387 521h2M460 521h1M476 521h1M123 522h1M200 522h1M212 522h2M223 522h1M244 522h1M264 522h1M272 522h16M310 522h16M342 522h1M363 522h1M384 522h3M461 522h1M475 522h1M124 523h1M200 523h1M214 523h3M223 523h1M244 523h1M264 523h1M284 523h1M288 523h22M322 523h1M342 523h1M363 523h1M382 523h2M461 523h1M474 523h1M125 524h1M199 524h1M217 524h3M222 524h1M243 524h1M264 524h1M284 524h1M303 524h1M322 524h1M343 524h1M364 524h1M379 524h3M462 524h1M472 524h2M126 525h2M199 525h1M220 525h4M243 525h1M263 525h1M284 525h1M303 525h1M322 525h1M343 525h1M364 525h1M375 525h4M463 525h1M471 525h1M128 526h1M198 526h1M224 526h3M243 526h1M263 526h1M284 526h1M303 526h1M322 526h1M343 526h1M364 526h1M372 526h3M464 526h1M470 526h1M129 527h1M198 527h1M227 527h2M243 527h1M263 527h1M284 527h1M303 527h1M323 527h1M343 527h1M365 527h1M369 527h3M464 527h1M468 527h2M130 528h2M197 528h1M229 528h3M242 528h1M263 528h1M284 528h1M303 528h1M323 528h1M343 528h1M365 528h1M367 528h2M465 528h1M467 528h1M132 529h1M197 529h1M232 529h4M242 529h1M263 529h1M284 529h1M303 529h1M323 529h1M343 529h1M363 529h4M466 529h1M133 530h2M197 530h1M236 530h4M242 530h1M263 530h1M283 530h1M303 530h1M323 530h1M344 530h1M359 530h4M464 530h2M135 531h1M196 531h1M240 531h4M263 531h1M283 531h1M303 531h1M323 531h1M344 531h1M354 531h5M462 531h2M136 532h2M196 532h1M244 532h4M262 532h1M283 532h1M303 532h1M323 532h1M344 532h1M350 532h4M461 532h1M138 533h2M195 533h1M248 533h6M262 533h1M283 533h1M303 533h1M324 533h1M344 533h6M459 533h2M140 534h1M195 534h1M254 534h6M262 534h1M283 534h1M303 534h1M324 534h1M338 534h6M458 534h1M141 535h2M194 535h1M260 535h4M283 535h1M303 535h1M324 535h1M334 535h4M456 535h2M143 536h1M194 536h1M264 536h6M283 536h1M303 536h1M324 536h1M328 536h6M455 536h1M144 537h2M193 537h1M270 537h17M303 537h1M311 537h17M453 537h2M146 538h1M193 538h1M287 538h24M324 538h1M452 538h1M147 539h2M193 539h1M324 539h1M450 539h2M149 540h1M192 540h1M324 540h1M449 540h1M150 541h2M192 541h1M324 541h1M447 541h2M152 542h1M191 542h1M324 542h1M445 542h2M153 543h2M191 543h1M325 543h1M444 543h1M155 544h2M190 544h1M325 544h1M442 544h2M157 545h1M190 545h1M325 545h1M441 545h1M158 546h2M189 546h1M325 546h1M439 546h2M160 547h2M189 547h1M325 547h1M437 547h2M162 548h2M188 548h1M325 548h1M435 548h2M164 549h2M188 549h1M325 549h1M433 549h2M166 550h2M188 550h1M325 550h1M431 550h2M168 551h2M187 551h1M325 551h1M429 551h2M170 552h2M187 552h1M325 552h1M427 552h2M172 553h2M186 553h1M325 553h1M425 553h2M174 554h3M186 554h1M326 554h1M422 554h3M177 555h2M185 555h1M326 555h1M420 555h2M179 556h2M185 556h1M326 556h1M418 556h2M181 557h2M184 557h1M326 557h1M416 557h2M183 558h3M326 558h1M413 558h3M186 559h2M326 559h1M411 559h2M188 560h2M326 560h1M409 560h2M190 561h2M326 561h1M407 561h2M192 562h3M326 562h1M404 562h3M195 563h2M326 563h1M402 563h2M197 564h2M326 564h1M400 564h2M199 565h2M327 565h1M398 565h2M201 566h3M327 566h1M395 566h3M204 567h3M327 567h1M391 567h4M207 568h4M327 568h1M388 568h3M211 569h3M327 569h1M385 569h3M214 570h3M327 570h1M382 570h3M217 571h3M327 571h1M379 571h3M220 572h3M327 572h1M376 572h3M223 573h3M327 573h1M372 573h4M226 574h4M327 574h1M369 574h3M230 575h4M327 575h1M365 575h4M234 576h4M328 576h1M361 576h4M238 577h5M328 577h1M356 577h5M243 578h5M328 578h1M351 578h5M248 579h7M328 579h1M343 579h8M255 580h10M328 580h1M333 580h10M265 581h10M323 581h10M275 582h10M313 582h10M285 583h28"/><path stroke="#ffff00" d="M331 32h1M335 32h1M339 32h1M332 33h1M334 33h1M336 33h1M338 33h1M340 33h1M333 34h1M337 34h1M341 34h1M345 34h1M333 35h1M337 35h1M341 35h1M344 35h2M333 36h1M337 36h1M341 36h1M343 36h1M345 36h1M333 37h1M337 37h1M341 37h2M345 37h1M333 38h1M337 38h1M341 38h1M345 38h1M333 39h1M337 39h1M341 39h1M345 39h1M333 40h1M337 40h1M341 40h1M345 40h1M333 41h1M337 41h1M341 41h1M345 41h1M333 42h1M337 42h1M341 42h1M345 42h1M333 43h1M337 43h1M341 43h1M345 43h1M333 44h1M337 44h1M341 44h1M345 44h1M333 45h1M337 45h1M342 45h1M344 45h1M333 46h1M337 46h1M343 46h1M342 47h1M344 47h1M341 48h1M345 48h1M745 116h1M748 116h1M750 116h2M744 117h2M748 117h2M752 117h1M745 118h1M747 118h1M749 118h1M752 118h1M745 119h1M747 119h1M750 119h2M745 120h1M747 120h1M751 120h1M746 121h1M752 121h1M746 122h1M752 122h1M746 123h1M752 123h1M751 124h1M270 152h1M745 156h1M752 156h1M746 157h6M747 158h1M750 158h1M747 159h1M750 159h1M747 160h1M750 160h1M747 161h1M750 161h1M747 162h1M750 162h1M746 163h6M745 164h1M752 164h1M431 171h1M431 172h1M427 173h9M431 174h1M431 175h1M431 176h1M431 177h1M435 177h3M431 178h1M434 178h1M438 178h1M431 179h3M439 179h1M431 180h1M439 180h1M431 181h1M439 181h1M431 182h1M438 182h1M431 183h1M437 183h1M431 184h1M437 184h1M431 185h1M437 185h1M438 186h1M439 187h1M747 198h3M410 199h1M746 199h1M750 199h1M746 200h1M750 200h1M744 201h4M749 201h4M744 203h9M155 296h1M747 296h1M155 297h1M745 297h5M155 298h1M747 298h1M747 299h1M749 299h2M155 300h1M747 300h2M751 300h1M155 301h1M747 301h1M751 301h1M747 302h1M750 302h1M155 303h1M747 303h1M750 303h1M751 304h1M155 305h1M48 385h1M54 385h1M58 385h3M47 386h2M54 386h1M57 386h1M61 386h1M46 387h1M48 387h1M54 387h1M56 387h1M62 387h1M48 388h1M53 388h1M55 388h1M62 388h1M48 389h1M52 389h1M56 389h1M62 389h1M48 390h1M52 390h1M57 390h1M61 390h1M48 391h1M52 391h1M58 391h3M48 392h1M52 392h1M59 392h1M48 393h1M52 393h1M60 393h1M49 394h1M51 394h1M61 394h1M50 395h1M62 395h1M50 396h1M62 396h1M50 397h1M62 397h1M50 398h1M62 398h1M50 399h1M62 399h1M61 400h1M60 401h1M254 435h1M258 437h1M262 438h1M266 439h1M497 456h1M509 456h1M498 457h1M508 457h1M498 458h1M508 458h1M499 459h2M506 459h2M501 460h5M499 461h2M506 461h2M498 462h1M508 462h1M498 463h1M508 463h1M497 464h1M509 464h1M497 465h1M509 465h1M497 466h1M509 466h1M497 467h1M509 467h1M497 468h1M509 468h1M498 469h1M508 469h1M498 470h1M508 470h1M499 471h2M506 471h2M501 472h5"/><path stroke="#00ff00" d="M203 50h5M202 51h1M208 51h1M201 52h1M209 52h1M201 53h1M209 53h1M201 54h1M209 54h1M202 55h1M208 55h1M197 56h7M207 56h7M197 60h17M744 126h1M752 126h1M745 127h1M751 127h1M746 128h1M750 128h1M746 129h1M750 129h1M744 130h9M746 131h1M750 131h1M746 132h1M750 132h1M745 133h1M751 133h1M744 134h1M752 134h1M272 159h1M274 161h1M275 163h1M277 165h1M745 166h1M752 166h1M279 167h1M746 167h6M747 168h1M750 168h1M280 169h1M747 169h1M750 169h1M747 170h1M750 170h1M282 171h1M747 171h1M750 171h1M747 172h1M750 172h1M284 173h1M746 173h6M745 174h1M752 174h1M285 175h1M287 177h1M289 179h1M290 181h1M292 183h1M294 185h1M295 187h1M297 189h1M299 191h1M300 193h1M302 195h1M304 197h1M305 199h1M307 201h1M309 203h1M406 204h1M310 205h1M405 205h1M405 206h1M744 206h1M746 206h1M748 206h1M312 207h1M405 207h1M745 207h1M747 207h1M749 207h1M404 208h1M745 208h1M747 208h1M749 208h1M314 209h1M404 209h1M745 209h1M747 209h1M749 209h1M404 210h1M745 210h1M747 210h1M749 210h1M315 211h1M403 211h1M745 211h1M747 211h1M749 211h1M403 212h1M745 212h1M747 212h1M749 212h1M752 212h1M317 213h1M403 213h1M745 213h1M747 213h1M749 213h1M752 213h1M402 214h1M750 214h2M319 215h1M402 215h1M402 216h1M182 217h1M321 217h1M401 217h1M401 218h1M183 219h1M322 219h1M401 219h1M400 220h1M184 221h1M324 221h1M400 221h1M400 222h1M185 223h1M326 223h1M399 223h1M399 224h1M186 225h1M327 225h1M399 225h1M398 226h1M187 227h1M329 227h1M398 227h1M398 228h1M188 229h1M331 229h1M398 229h1M397 230h1M189 231h1M332 231h1M397 231h1M397 232h1M190 233h1M334 233h1M396 233h1M396 234h1M191 235h1M336 235h1M396 235h1M395 236h1M192 237h1M337 237h1M395 237h1M395 238h1M193 239h1M339 239h1M394 239h1M394 240h1M194 241h1M341 241h1M394 241h1M393 242h1M195 243h1M342 243h1M393 243h1M393 244h1M196 245h1M344 245h1M392 245h1M392 246h1M197 247h1M346 247h1M392 247h1M391 248h1M198 249h1M347 249h1M391 249h1M391 250h1M199 251h1M349 251h1M390 251h1M390 252h1M200 253h1M351 253h1M390 253h1M389 254h1M201 255h1M352 255h1M389 255h1M389 256h1M746 256h1M750 256h1M202 257h1M354 257h1M388 257h1M747 257h3M388 258h1M746 258h1M750 258h1M203 259h1M356 259h1M388 259h1M746 259h1M750 259h1M387 260h1M746 260h1M750 260h1M204 261h1M357 261h1M387 261h1M747 261h3M387 262h1M748 262h1M205 263h1M359 263h1M386 263h1M746 263h5M386 264h1M748 264h1M206 265h1M361 265h1M386 265h1M385 266h1M747 266h3M207 267h1M362 267h1M385 267h1M746 267h1M750 267h1M385 268h1M746 268h1M750 268h1M208 269h1M364 269h1M384 269h1M746 269h1M750 269h1M384 270h1M747 270h3M209 271h1M366 271h1M384 271h1M748 271h1M383 272h1M746 272h5M210 273h1M368 273h1M383 273h1M748 273h1M383 274h1M748 274h1M211 275h1M369 275h1M383 275h1M382 276h1M212 277h1M371 277h1M382 277h1M382 278h1M213 279h1M373 279h1M381 279h1M381 280h1M214 281h1M374 281h1M381 281h1M380 282h1M215 283h1M376 283h1M380 283h1M380 284h1M216 285h1M378 285h2M379 286h1M217 287h1M379 287h1M378 288h1M218 289h1M378 289h1M381 289h1M378 290h1M219 291h1M377 291h1M383 291h1M377 292h1M220 293h1M377 293h1M384 293h1M376 294h1M221 295h1M376 295h1M386 295h1M376 296h1M222 297h1M375 297h1M388 297h1M375 298h1M223 299h1M375 299h1M389 299h1M374 300h1M224 301h1M374 301h1M391 301h1M374 302h1M225 303h1M373 303h1M393 303h1M373 304h1M226 305h1M373 305h1M394 305h1M372 306h1M745 306h1M751 306h1M227 307h1M372 307h1M396 307h1M746 307h1M750 307h1M372 308h1M746 308h1M748 308h1M750 308h1M228 309h1M371 309h1M398 309h1M746 309h5M371 310h1M746 310h1M748 310h1M750 310h1M229 311h1M371 311h1M399 311h1M745 311h1M748 311h1M751 311h1M370 312h1M748 312h1M230 313h1M370 313h1M401 313h1M747 313h1M749 313h1M370 314h1M748 314h1M231 315h1M369 315h1M403 315h1M369 316h1M232 317h1M369 317h1M404 317h1M368 318h1M233 319h1M368 319h1M406 319h1M368 320h1M234 321h1M367 321h1M408 321h1M367 322h1M235 323h1M367 323h1M409 323h1M367 324h1M236 325h1M366 325h1M411 325h1M366 326h1M237 327h1M366 327h1M413 327h1M365 328h1M238 329h1M365 329h1M415 329h1M365 330h1M239 331h1M364 331h1M416 331h1M552 331h1M566 331h1M364 332h1M553 332h1M565 332h1M240 333h1M364 333h1M418 333h1M554 333h11M363 334h1M556 334h1M562 334h1M241 335h1M363 335h1M420 335h1M556 335h1M562 335h1M363 336h1M556 336h1M562 336h1M242 337h1M362 337h1M421 337h1M556 337h1M562 337h1M362 338h1M556 338h1M562 338h1M243 339h1M362 339h1M423 339h1M556 339h1M562 339h1M361 340h1M556 340h1M562 340h1M244 341h1M361 341h1M425 341h1M556 341h1M562 341h1M361 342h1M556 342h1M562 342h1M245 343h1M360 343h1M426 343h1M556 343h1M562 343h1M360 344h1M556 344h1M562 344h1M246 345h1M360 345h1M428 345h1M554 345h11M359 346h1M553 346h1M565 346h1M247 347h1M359 347h1M430 347h1M552 347h1M566 347h1M359 348h1M248 349h1M358 349h1M431 349h1M358 350h1M249 351h1M358 351h1M357 352h1M250 353h1M357 353h1M357 354h1M251 355h1M356 355h1M356 356h1M252 357h1M356 357h1M355 358h1M253 359h1M355 359h1M355 360h1M254 361h1M354 361h1M354 362h1M255 363h1M354 363h1M353 364h1M256 365h1M353 365h1M353 366h1M257 367h1M352 367h1M352 368h1M257 369h1M352 369h1M168 370h1M352 370h1M258 371h1M351 371h1M351 372h1M259 373h1M351 373h1M350 374h1M260 375h1M350 375h1M350 376h1M139 377h5M261 377h1M349 377h1M138 378h1M144 378h1M349 378h1M137 379h1M145 379h1M262 379h1M349 379h1M137 380h1M145 380h1M348 380h1M137 381h1M145 381h1M263 381h1M348 381h1M137 382h1M145 382h1M348 382h1M137 383h1M145 383h1M264 383h1M347 383h1M138 384h1M144 384h1M347 384h1M139 385h5M265 385h1M347 385h1M141 386h1M346 386h1M141 387h1M266 387h1M346 387h1M141 388h1M346 388h1M137 389h9M267 389h1M345 389h1M141 390h1M345 390h1M141 391h1M268 391h1M141 392h1M344 392h1M141 393h1M269 393h1M344 393h1M344 394h1M270 395h1M343 395h1M343 396h1M271 397h1M343 397h1M342 398h1M272 399h1M342 399h1M342 400h1M273 401h1M341 401h1M341 402h1M274 403h1M341 403h1M340 404h1M275 405h1M340 405h1M340 406h1M276 407h1M339 407h1M339 408h1M277 409h1M339 409h1M338 410h1M278 411h1M338 411h1M338 412h1M279 413h1M337 413h1M337 414h1M280 415h1M337 415h1M337 416h1M281 417h1M336 417h1M336 418h1M336 419h1M335 420h1M283 421h1M335 421h1M335 422h1M284 423h1M334 423h1M334 424h1M285 425h1M334 425h1M333 426h1M286 427h1M333 427h1M333 428h1M287 429h1M332 429h1M332 430h1M288 431h1M332 431h1M331 432h1M289 433h1M331 433h1M331 434h1M290 435h1M330 435h1M330 436h1M291 437h1M330 437h1M329 438h1M292 439h1M329 439h1M293 441h1M264 444h1M294 449h1M251 466h1M263 466h1M252 467h1M262 467h1M253 468h1M261 468h1M253 469h1M261 469h1M253 470h1M257 470h1M261 470h1M253 471h1M257 471h1M261 471h1M289 471h1M297 471h1M253 472h9M290 472h1M296 472h1M253 473h1M257 473h1M261 473h1M291 473h5M253 474h1M257 474h1M261 474h1M290 474h1M296 474h1M252 475h1M257 475h1M262 475h1M289 475h1M297 475h1M251 476h1M257 476h1M263 476h1M289 476h1M297 476h1M257 477h1M289 477h1M297 477h1M256 478h3M289 478h1M297 478h1M255 479h1M259 479h1M289 479h1M297 479h1M255 480h1M259 480h1M290 480h1M296 480h1M255 481h1M259 481h1M291 481h5M256 482h3M293 482h1M293 483h1M293 484h1M289 485h9M293 486h1M293 487h1M130 495h1M136 495h1M142 495h1M129 496h2M135 496h2M141 496h1M129 497h1M131 497h1M135 497h1M137 497h1M141 497h1M128 498h1M131 498h1M134 498h1M137 498h1M140 498h1M127 499h1M131 499h1M133 499h1M137 499h1M139 499h1M127 500h1M132 500h2M138 500h2M126 501h1M132 501h1M138 501h1M130 505h1M136 505h1M142 505h1M129 506h2M135 506h2M141 506h1M129 507h1M131 507h1M135 507h1M137 507h1M141 507h1M128 508h1M131 508h1M134 508h1M137 508h1M140 508h1M127 509h1M131 509h1M133 509h1M137 509h1M139 509h1M127 510h1M132 510h2M138 510h2M126 511h1M132 511h1M138 511h1"/><path stroke="#7f7f7f" d="M287 61h1M291 61h1M299 61h1M302 61h1M307 61h1M270 62h1M278 62h1M283 62h1M287 62h1M291 62h1M299 62h1M302 62h1M307 62h1M311 62h1M319 62h1M323 62h1M327 62h1M266 63h1M270 63h1M278 63h1M283 63h1M287 63h1M291 63h1M299 63h1M302 63h1M307 63h1M311 63h1M319 63h1M323 63h1M327 63h1M332 63h1M262 64h1M266 64h1M270 64h1M278 64h1M283 64h1M287 64h1M291 64h1M299 64h1M302 64h1M307 64h1M311 64h1M319 64h1M323 64h1M327 64h1M332 64h1M258 65h1M262 65h1M266 65h1M270 65h1M279 65h1M283 65h1M287 65h1M291 65h1M299 65h1M302 65h1M307 65h1M311 65h1M319 65h1M323 65h1M327 65h1M332 65h1M340 65h1M250 66h1M258 66h1M262 66h1M266 66h1M271 66h1M279 66h1M283 66h1M287 66h1M291 66h1M299 66h1M302 66h1M307 66h1M311 66h1M319 66h1M323 66h1M327 66h1M332 66h1M340 66h1M344 66h1M348 66h1M246 67h1M250 67h1M258 67h1M262 67h1M267 67h1M271 67h1M279 67h1M283 67h1M287 67h1M291 67h1M299 67h1M302 67h1M307 67h1M311 67h1M319 67h1M323 67h1M327 67h1M331 67h1M339 67h1M344 67h1M348 67h1M352 67h1M241 68h1M246 68h1M250 68h1M259 68h1M263 68h1M267 68h1M271 68h1M279 68h1M284 68h1M288 68h1M291 68h1M299 68h1M302 68h1M306 68h1M310 68h1M318 68h1M323 68h1M327 68h1M331 68h1M339 68h1M343 68h1M348 68h1M352 68h1M237 69h1M241 69h1M246 69h1M250 69h1M259 69h1M263 69h1M267 69h1M271 69h1M279 69h1M284 69h1M288 69h1M291 69h1M299 69h1M302 69h1M306 69h1M310 69h1M318 69h1M322 69h1M326 69h1M331 69h1M339 69h1M343 69h1M347 69h1M352 69h1M360 69h1M237 70h1M242 70h1M247 70h1M251 70h1M259 70h1M263 70h1M267 70h1M271 70h1M279 70h1M284 70h1M288 70h1M291 70h1M299 70h1M302 70h1M306 70h1M310 70h1M318 70h1M322 70h1M326 70h1M331 70h1M339 70h1M343 70h1M347 70h1M351 70h1M360 70h1M364 70h1M229 71h1M238 71h1M242 71h1M247 71h1M251 71h1M259 71h1M263 71h1M267 71h1M271 71h1M279 71h1M284 71h1M288 71h1M291 71h1M299 71h1M302 71h1M306 71h1M310 71h1M318 71h1M322 71h1M326 71h1M331 71h1M338 71h1M343 71h1M347 71h1M351 71h1M360 71h1M364 71h1M368 71h1M229 72h1M238 72h1M242 72h1M247 72h1M251 72h1M259 72h1M263 72h1M267 72h1M271 72h1M280 72h1M284 72h1M288 72h1M291 72h1M299 72h1M302 72h1M306 72h1M310 72h1M318 72h1M322 72h1M326 72h1M331 72h1M338 72h1M342 72h1M347 72h1M351 72h1M359 72h1M363 72h1M368 72h1M225 73h1M230 73h1M238 73h1M243 73h1M247 73h1M251 73h1M259 73h1M263 73h1M268 73h1M272 73h1M280 73h1M284 73h1M288 73h1M291 73h1M299 73h1M302 73h1M306 73h1M310 73h1M318 73h1M322 73h1M326 73h1M330 73h1M338 73h1M342 73h1M346 73h1M351 73h1M359 73h1M363 73h1M367 73h1M372 73h1M222 74h1M226 74h1M230 74h1M239 74h1M243 74h1M248 74h1M251 74h1M259 74h1M264 74h1M268 74h1M272 74h1M280 74h1M284 74h1M288 74h1M291 74h1M299 74h1M302 74h1M306 74h1M310 74h1M318 74h1M322 74h1M326 74h1M330 74h1M338 74h1M342 74h1M346 74h1M350 74h1M359 74h1M363 74h1M367 74h1M371 74h1M218 75h1M222 75h1M226 75h1M230 75h1M239 75h1M243 75h1M248 75h1M251 75h1M260 75h1M264 75h1M268 75h1M272 75h1M280 75h1M284 75h1M318 75h1M322 75h1M326 75h1M330 75h1M338 75h1M342 75h1M346 75h1M350 75h1M359 75h1M362 75h1M367 75h1M371 75h1M380 75h1M218 76h1M223 76h1M227 76h1M231 76h1M239 76h1M243 76h1M248 76h1M252 76h1M260 76h1M264 76h1M268 76h1M326 76h1M330 76h1M337 76h1M341 76h1M346 76h1M350 76h1M358 76h1M362 76h1M366 76h1M371 76h1M380 76h1M219 77h1M223 77h1M227 77h1M231 77h1M239 77h1M244 77h1M248 77h1M252 77h1M260 77h1M264 77h1M337 77h1M341 77h1M345 77h1M350 77h1M358 77h1M362 77h1M366 77h1M370 77h1M379 77h1M384 77h1M210 78h1M219 78h1M223 78h1M227 78h1M231 78h1M240 78h1M244 78h1M249 78h1M252 78h1M341 78h1M345 78h1M349 78h1M358 78h1M362 78h1M366 78h1M370 78h1M379 78h1M383 78h1M388 78h1M210 79h1M219 79h1M224 79h1M228 79h1M231 79h1M240 79h1M244 79h1M249 79h1M252 79h1M345 79h1M349 79h1M358 79h1M361 79h1M366 79h1M370 79h1M378 79h1M383 79h1M388 79h1M206 80h1M211 80h1M220 80h1M224 80h1M228 80h1M232 80h1M240 80h1M245 80h1M249 80h1M349 80h1M357 80h1M361 80h1M365 80h1M370 80h1M378 80h1M382 80h1M387 80h1M392 80h1M206 81h1M211 81h1M220 81h1M224 81h1M228 81h1M232 81h1M241 81h1M245 81h1M357 81h1M361 81h1M365 81h1M369 81h1M378 81h1M382 81h1M387 81h1M391 81h1M202 82h1M207 82h1M212 82h1M220 82h1M224 82h1M229 82h1M232 82h1M241 82h1M357 82h1M360 82h1M365 82h1M369 82h1M377 82h1M382 82h1M386 82h1M391 82h1M203 83h1M207 83h1M212 83h1M220 83h1M225 83h1M229 83h1M233 83h1M360 83h1M364 83h1M369 83h1M377 83h1M381 83h1M386 83h1M390 83h1M399 83h1M199 84h1M203 84h1M208 84h1M212 84h1M221 84h1M225 84h1M230 84h1M233 84h1M364 84h1M368 84h1M377 84h1M381 84h1M386 84h1M390 84h1M399 84h1M199 85h1M204 85h1M208 85h1M213 85h1M221 85h1M225 85h1M230 85h1M368 85h1M376 85h1M381 85h1M385 85h1M389 85h1M398 85h1M403 85h1M200 86h1M204 86h1M209 86h1M213 86h1M221 86h1M226 86h1M376 86h1M380 86h1M385 86h1M389 86h1M398 86h1M402 86h1M191 87h1M200 87h1M205 87h1M209 87h1M213 87h1M222 87h1M226 87h1M375 87h1M380 87h1M385 87h1M388 87h1M397 87h1M402 87h1M407 87h1M192 88h1M201 88h1M205 88h1M209 88h1M214 88h1M222 88h1M375 88h1M379 88h1M384 88h1M388 88h1M397 88h1M401 88h1M406 88h1M187 89h1M192 89h1M201 89h1M206 89h1M210 89h1M214 89h1M379 89h1M384 89h1M387 89h1M396 89h1M401 89h1M406 89h1M410 89h1M188 90h1M193 90h1M202 90h1M206 90h1M210 90h1M215 90h1M383 90h1M387 90h1M396 90h1M400 90h1M405 90h1M410 90h1M183 91h1M188 91h1M193 91h1M202 91h1M207 91h1M211 91h1M386 91h1M396 91h1M400 91h1M405 91h1M409 91h1M184 92h1M189 92h1M194 92h1M203 92h1M207 92h1M211 92h1M395 92h1M399 92h1M404 92h1M409 92h1M180 93h1M184 93h1M189 93h1M194 93h1M203 93h1M208 93h1M395 93h1M399 93h1M404 93h1M408 93h1M417 93h1M181 94h1M185 94h1M190 94h1M195 94h1M204 94h1M394 94h1M398 94h1M403 94h1M407 94h1M417 94h1M181 95h1M185 95h1M191 95h1M195 95h1M204 95h1M394 95h1M398 95h1M403 95h1M407 95h1M416 95h1M421 95h1M182 96h1M186 96h1M191 96h1M196 96h1M397 96h1M402 96h1M406 96h1M416 96h1M420 96h1M173 97h1M183 97h1M187 97h1M192 97h1M196 97h1M397 97h1M402 97h1M406 97h1M415 97h1M420 97h1M425 97h1M174 98h1M183 98h1M187 98h1M192 98h1M197 98h1M401 98h1M405 98h1M414 98h1M419 98h1M424 98h1M174 99h1M184 99h1M188 99h1M193 99h1M197 99h1M401 99h1M405 99h1M414 99h1M418 99h1M424 99h1M428 99h1M170 100h1M175 100h1M184 100h1M188 100h1M193 100h1M404 100h1M413 100h1M418 100h1M423 100h1M427 100h1M170 101h1M175 101h1M185 101h1M189 101h1M413 101h1M417 101h1M422 101h1M427 101h1M166 102h1M171 102h1M176 102h1M186 102h1M189 102h1M412 102h1M417 102h1M422 102h1M426 102h1M167 103h1M172 103h1M177 103h1M186 103h1M412 103h1M416 103h1M421 103h1M425 103h1M167 104h1M172 104h1M177 104h1M187 104h1M411 104h1M415 104h1M421 104h1M425 104h1M435 104h1M163 105h1M168 105h1M173 105h1M178 105h1M415 105h1M420 105h1M424 105h1M434 105h1M163 106h1M169 106h1M174 106h1M178 106h1M414 106h1M419 106h1M424 106h1M434 106h1M164 107h1M169 107h1M174 107h1M179 107h1M419 107h1M423 107h1M433 107h1M438 107h1M165 108h1M170 108h1M175 108h1M179 108h1M418 108h1M422 108h1M432 108h1M438 108h1M156 109h1M166 109h1M170 109h1M176 109h1M180 109h1M422 109h1M432 109h1M437 109h1M442 109h1M157 110h1M166 110h1M171 110h1M176 110h1M421 110h1M431 110h1M436 110h1M441 110h1M157 111h1M167 111h1M172 111h1M431 111h1M435 111h1M440 111h1M445 111h1M153 112h1M158 112h1M168 112h1M172 112h1M430 112h1M435 112h1M440 112h1M444 112h1M154 113h1M159 113h1M169 113h1M173 113h1M429 113h1M434 113h1M439 113h1M444 113h1M149 114h1M154 114h1M160 114h1M169 114h1M429 114h1M433 114h1M438 114h1M443 114h1M150 115h1M155 115h1M160 115h1M170 115h1M428 115h1M432 115h1M437 115h1M442 115h1M151 116h1M156 116h1M161 116h1M432 116h1M436 116h1M441 116h1M146 117h1M151 117h1M157 117h1M162 117h1M431 117h1M436 117h1M441 117h1M451 117h1M147 118h1M152 118h1M158 118h1M163 118h1M435 118h1M440 118h1M450 118h1M148 119h1M153 119h1M159 119h1M163 119h1M434 119h1M439 119h1M450 119h1M149 120h1M154 120h1M159 120h1M164 120h1M438 120h1M449 120h1M454 120h1M150 121h1M155 121h1M160 121h1M373 121h1M438 121h1M448 121h1M453 121h1M151 122h1M156 122h1M161 122h1M437 122h1M447 122h1M452 122h1M458 122h1M140 123h1M151 123h1M156 123h1M372 123h1M446 123h1M451 123h1M457 123h1M141 124h1M152 124h1M157 124h1M445 124h1M450 124h1M456 124h1M136 125h1M142 125h1M153 125h1M371 125h1M445 125h1M450 125h1M455 125h1M461 125h1M137 126h1M143 126h1M154 126h1M444 126h1M449 126h1M454 126h1M460 126h1M138 127h1M144 127h1M155 127h1M370 127h1M443 127h1M448 127h1M453 127h1M459 127h1M133 128h1M139 128h1M145 128h1M447 128h1M453 128h1M458 128h1M134 129h1M140 129h1M146 129h1M369 129h1M446 129h1M452 129h1M457 129h1M135 130h1M141 130h1M147 130h1M451 130h1M456 130h1M467 130h1M130 131h1M136 131h1M142 131h1M148 131h1M368 131h1M450 131h1M456 131h1M466 131h1M131 132h1M137 132h1M143 132h1M149 132h1M449 132h1M455 132h1M465 132h1M132 133h1M138 133h1M144 133h1M368 133h1M454 133h1M464 133h1M470 133h1M133 134h1M139 134h1M145 134h1M453 134h1M463 134h1M469 134h1M134 135h1M140 135h1M146 135h1M367 135h1M452 135h1M462 135h1M468 135h1M135 136h2M141 136h1M462 136h1M467 136h1M473 136h1M125 137h1M137 137h1M142 137h1M366 137h1M461 137h1M466 137h1M472 137h1M126 138h1M138 138h1M143 138h1M460 138h1M465 138h1M471 138h1M127 139h1M139 139h1M365 139h1M459 139h1M464 139h1M470 139h1M122 140h1M128 140h1M140 140h1M458 140h1M463 140h1M469 140h1M475 140h1M123 141h1M129 141h1M364 141h1M462 141h1M468 141h1M474 141h1M124 142h1M130 142h2M461 142h1M467 142h1M473 142h1M125 143h1M132 143h1M363 143h1M460 143h1M466 143h1M472 143h1M120 144h1M126 144h1M133 144h1M465 144h1M471 144h1M121 145h1M127 145h2M134 145h1M363 145h1M464 145h1M470 145h1M122 146h1M129 146h1M135 146h1M463 146h1M469 146h1M481 146h1M117 147h1M123 147h1M130 147h1M362 147h1M468 147h1M480 147h1M118 148h2M124 148h2M131 148h1M467 148h1M479 148h1M120 149h1M126 149h1M132 149h1M361 149h1M466 149h1M478 149h1M484 149h1M121 150h1M127 150h1M476 150h2M483 150h1M122 151h1M128 151h1M360 151h1M475 151h1M481 151h2M123 152h1M129 152h1M474 152h1M480 152h1M111 153h1M124 153h2M359 153h1M473 153h1M479 153h1M486 153h1M112 154h2M126 154h1M472 154h1M478 154h1M484 154h2M114 155h1M127 155h1M172 155h1M359 155h1M471 155h1M477 155h1M483 155h1M109 156h1M115 156h1M475 156h2M482 156h1M489 156h1M110 157h1M116 157h2M174 157h1M358 157h1M474 157h1M481 157h1M487 157h2M111 158h2M118 158h1M480 158h1M486 158h1M113 159h1M119 159h1M175 159h1M357 159h1M478 159h2M485 159h1M107 160h2M114 160h1M120 160h2M477 160h1M483 160h2M109 161h1M115 161h1M122 161h1M177 161h1M356 161h1M476 161h1M482 161h1M110 162h1M116 162h2M481 162h1M104 163h1M111 163h2M118 163h1M179 163h1M355 163h1M479 163h2M492 163h2M105 164h2M113 164h1M119 164h1M478 164h1M491 164h1M107 165h1M114 165h1M181 165h1M354 165h1M490 165h1M108 166h2M115 166h2M488 166h2M496 166h1M110 167h2M117 167h1M182 167h1M354 167h1M487 167h1M494 167h2M112 168h1M486 168h1M493 168h1M113 169h2M184 169h1M353 169h1M484 169h2M491 169h2M99 170h1M115 170h1M483 170h1M489 170h2M497 170h2M100 171h2M186 171h1M352 171h1M488 171h1M496 171h1M102 172h1M486 172h2M494 172h2M97 173h1M103 173h2M188 173h1M351 173h1M485 173h1M493 173h1M501 173h1M98 174h2M105 174h2M491 174h2M499 174h2M100 175h1M107 175h1M190 175h1M350 175h1M490 175h1M497 175h2M101 176h2M108 176h2M488 176h2M495 176h2M95 177h1M103 177h2M110 177h1M191 177h1M349 177h1M494 177h1M96 178h2M105 178h1M492 178h2M98 179h1M106 179h2M193 179h1M349 179h1M490 179h2M99 180h2M108 180h1M489 180h1M505 180h1M93 181h2M101 181h2M195 181h1M348 181h1M503 181h2M95 182h2M103 182h1M502 182h1M97 183h1M104 183h2M197 183h1M347 183h1M500 183h2M507 183h1M98 184h2M106 184h1M498 184h2M505 184h2M100 185h2M198 185h1M346 185h1M497 185h1M503 185h2M102 186h2M495 186h2M501 186h2M104 187h1M200 187h1M345 187h1M424 187h1M494 187h1M500 187h1M509 187h1M89 188h2M423 188h1M498 188h2M507 188h2M91 189h2M202 189h1M344 189h1M422 189h1M496 189h2M505 189h2M93 190h1M421 190h1M503 190h2M87 191h1M94 191h2M204 191h1M344 191h1M419 191h2M502 191h1M510 191h2M88 192h2M96 192h2M418 192h1M500 192h2M508 192h2M90 193h2M98 193h2M205 193h1M343 193h1M417 193h1M498 193h2M506 193h2M92 194h2M100 194h1M416 194h1M504 194h2M85 195h1M94 195h2M207 195h1M342 195h1M415 195h1M502 195h2M86 196h2M96 196h2M463 196h1M500 196h2M88 197h2M98 197h2M209 197h1M341 197h1M461 197h1M499 197h1M90 198h2M514 198h1M83 199h2M92 199h2M211 199h1M340 199h1M459 199h1M512 199h2M85 200h2M94 200h2M457 200h1M510 200h2M87 201h2M96 201h2M212 201h1M340 201h1M455 201h1M508 201h2M89 202h3M453 202h1M506 202h2M516 202h1M92 203h2M214 203h1M339 203h1M504 203h2M514 203h2M94 204h2M451 204h1M503 204h1M512 204h2M216 205h1M338 205h1M449 205h1M510 205h2M80 206h1M447 206h1M508 206h2M517 206h2M81 207h2M218 207h1M337 207h1M445 207h1M506 207h2M515 207h2M83 208h2M505 208h1M512 208h3M85 209h2M220 209h1M336 209h1M443 209h1M510 209h2M78 210h2M87 210h2M441 210h1M508 210h2M519 210h2M80 211h2M89 211h2M221 211h1M335 211h1M439 211h1M506 211h2M517 211h2M82 212h3M91 212h1M437 212h1M514 212h3M85 213h3M223 213h1M335 213h1M511 213h3M76 214h2M88 214h2M435 214h1M509 214h2M78 215h2M90 215h1M225 215h1M334 215h1M433 215h1M508 215h1M80 216h3M431 216h1M83 217h3M227 217h1M333 217h1M429 217h1M75 218h2M86 218h2M522 218h2M77 219h2M88 219h2M228 219h1M332 219h1M427 219h1M519 219h3M79 220h3M425 220h1M515 220h4M82 221h3M230 221h1M331 221h1M423 221h1M512 221h3M85 222h2M121 222h1M421 222h1M510 222h2M523 222h2M87 223h2M123 223h1M232 223h1M330 223h1M520 223h3M125 224h1M419 224h1M516 224h4M127 225h1M129 225h1M234 225h1M330 225h1M417 225h1M513 225h3M525 225h1M73 226h1M131 226h1M415 226h1M511 226h2M523 226h2M74 227h3M133 227h1M235 227h1M413 227h1M520 227h3M77 228h4M135 228h1M517 228h3M81 229h3M137 229h1M237 229h1M328 229h1M515 229h2M526 229h2M71 230h2M84 230h2M139 230h1M409 230h1M513 230h2M523 230h3M73 231h3M141 231h1M239 231h1M327 231h1M407 231h1M519 231h4M76 232h4M143 232h1M145 232h1M405 232h1M516 232h3M80 233h3M147 233h1M241 233h1M326 233h1M514 233h2M70 234h2M83 234h2M149 234h1M403 234h1M72 235h3M151 235h1M243 235h1M325 235h1M401 235h1M75 236h4M153 236h1M399 236h1M79 237h3M155 237h1M244 237h1M325 237h1M397 237h1M528 237h2M69 238h3M82 238h2M157 238h1M159 238h1M525 238h3M72 239h4M161 239h1M246 239h1M324 239h1M395 239h1M521 239h4M76 240h4M163 240h1M393 240h1M518 240h3M80 241h3M165 241h1M248 241h1M323 241h1M391 241h1M516 241h2M529 241h2M167 242h1M389 242h1M526 242h3M169 243h1M250 243h1M322 243h1M522 243h4M171 244h1M173 244h1M387 244h1M519 244h3M175 245h1M251 245h1M321 245h1M385 245h1M517 245h2M67 246h3M177 246h1M383 246h1M529 246h3M70 247h4M179 247h1M253 247h1M320 247h1M381 247h1M525 247h4M74 248h4M181 248h1M521 248h4M78 249h3M183 249h1M255 249h1M320 249h1M379 249h1M518 249h3M66 250h3M185 250h1M377 250h1M529 250h4M69 251h4M187 251h1M189 251h1M257 251h1M319 251h1M375 251h1M523 251h6M73 252h4M191 252h1M519 252h4M77 253h3M193 253h1M258 253h1M318 253h1M373 253h1M65 254h3M195 254h1M371 254h1M68 255h4M197 255h1M260 255h1M317 255h1M369 255h1M72 256h4M199 256h1M367 256h1M76 257h3M201 257h1M203 257h1M262 257h1M316 257h1M65 258h2M205 258h1M365 258h1M531 258h3M67 259h4M207 259h1M264 259h1M316 259h1M363 259h1M524 259h7M71 260h5M209 260h1M361 260h1M521 260h3M76 261h2M211 261h1M265 261h1M315 261h1M359 261h1M213 262h1M531 262h4M215 263h1M267 263h1M314 263h1M357 263h1M525 263h6M217 264h1M219 264h1M355 264h1M521 264h4M221 265h1M269 265h1M313 265h1M353 265h1M63 266h4M223 266h1M351 266h1M532 266h4M67 267h6M225 267h1M271 267h1M312 267h1M526 267h6M73 268h4M227 268h1M349 268h1M522 268h4M229 269h1M273 269h1M311 269h1M347 269h1M231 270h1M233 270h1M345 270h1M533 270h4M62 271h7M235 271h1M274 271h1M311 271h1M343 271h1M526 271h7M69 272h7M237 272h1M523 272h3M239 273h1M276 273h1M310 273h1M341 273h1M241 274h1M339 274h1M62 275h7M243 275h1M278 275h1M309 275h1M337 275h1M69 276h7M245 276h1M335 276h1M247 277h1M249 277h1M280 277h1M308 277h1M251 278h1M333 278h1M534 278h3M62 279h6M253 279h1M281 279h1M307 279h1M331 279h1M527 279h7M68 280h8M255 280h1M329 280h1M523 280h4M257 281h1M283 281h1M306 281h1M327 281h1M259 282h1M261 283h1M263 283h1M285 283h1M306 283h1M325 283h1M530 283h7M265 284h1M323 284h1M523 284h7M267 285h1M287 285h1M305 285h1M321 285h1M269 286h1M319 286h1M61 287h7M271 287h1M288 287h1M304 287h1M530 287h8M68 288h7M273 288h1M317 288h1M524 288h6M275 289h1M277 289h1M290 289h1M303 289h1M315 289h1M279 290h1M313 290h1M61 291h7M281 291h1M292 291h1M302 291h1M311 291h1M524 291h14M68 292h7M283 292h1M285 293h1M294 293h1M301 293h1M309 293h1M287 294h1M307 294h1M289 295h1M295 295h1M301 295h1M305 295h1M61 296h14M291 296h1M293 296h1M303 296h1M295 297h1M297 297h1M300 297h1M297 298h1M301 298h1M61 299h14M299 299h1M524 299h14M297 300h1M301 300h1M298 301h1M301 301h1M303 301h1M295 302h1M305 302h1M307 302h1M524 302h14M293 303h1M297 303h1M303 303h1M309 303h1M291 304h1M311 304h1M289 305h1M297 305h1M304 305h1M313 305h1M315 306h1M524 306h7M61 307h14M287 307h1M296 307h1M306 307h1M317 307h1M531 307h7M285 308h1M319 308h1M283 309h1M295 309h1M308 309h1M321 309h1M323 309h1M68 310h8M281 310h1M325 310h1M524 310h7M62 311h6M294 311h1M310 311h1M327 311h1M531 311h6M279 312h1M329 312h1M277 313h1M293 313h1M311 313h1M331 313h1M68 314h8M275 314h1M333 314h1M62 315h6M273 315h1M292 315h1M313 315h1M335 315h1M337 315h1M339 316h1M271 317h1M292 317h1M315 317h1M341 317h1M72 318h4M269 318h1M343 318h1M523 318h7M65 319h7M267 319h1M291 319h1M317 319h1M345 319h1M530 319h7M62 320h3M265 320h1M347 320h1M290 321h1M318 321h1M349 321h1M351 321h1M263 322h1M353 322h1M523 322h7M261 323h1M289 323h1M320 323h1M355 323h1M530 323h7M259 324h1M357 324h1M257 325h1M288 325h1M322 325h1M359 325h1M73 326h4M361 326h1M522 326h7M66 327h7M255 327h1M287 327h1M324 327h1M363 327h1M529 327h8M63 328h3M253 328h1M367 328h1M251 329h1M287 329h1M325 329h1M369 329h1M73 330h4M249 330h1M371 330h1M522 330h4M67 331h6M286 331h1M327 331h1M373 331h1M526 331h6M63 332h4M247 332h1M375 332h1M532 332h4M245 333h1M285 333h1M329 333h1M377 333h1M74 334h4M243 334h1M379 334h1M381 334h1M68 335h6M284 335h1M331 335h1M383 335h1M64 336h4M385 336h1M239 337h1M283 337h1M333 337h1M387 337h1M521 337h2M75 338h3M237 338h1M389 338h1M523 338h4M68 339h7M235 339h1M282 339h1M334 339h1M391 339h1M527 339h5M65 340h3M233 340h1M393 340h1M532 340h2M282 341h1M336 341h1M395 341h1M397 341h1M520 341h3M231 342h1M399 342h1M523 342h4M229 343h1M281 343h1M338 343h1M401 343h1M527 343h4M227 344h1M403 344h1M531 344h2M225 345h1M280 345h1M340 345h1M405 345h1M519 345h3M76 346h4M407 346h1M522 346h4M70 347h6M223 347h1M279 347h1M341 347h1M409 347h1M411 347h1M526 347h4M66 348h4M221 348h1M413 348h1M530 348h3M78 349h3M219 349h1M278 349h1M343 349h1M415 349h1M518 349h3M74 350h4M217 350h1M417 350h1M521 350h4M70 351h4M278 351h1M345 351h1M419 351h1M525 351h4M67 352h3M215 352h1M421 352h1M529 352h3M80 353h2M213 353h1M277 353h1M347 353h1M423 353h1M77 354h3M425 354h1M73 355h4M276 355h1M348 355h1M429 355h1M70 356h3M209 356h1M431 356h1M68 357h2M81 357h2M275 357h1M350 357h1M433 357h1M516 357h3M78 358h3M205 358h1M435 358h1M519 358h4M74 359h4M203 359h1M274 359h1M352 359h1M437 359h1M523 359h4M71 360h3M439 360h1M441 360h1M515 360h2M527 360h3M69 361h2M201 361h1M273 361h1M443 361h1M517 361h3M199 362h1M445 362h1M520 362h4M197 363h1M273 363h1M355 363h1M447 363h1M524 363h3M195 364h1M449 364h1M514 364h2M527 364h2M83 365h2M272 365h1M357 365h1M451 365h1M516 365h3M80 366h3M193 366h1M453 366h1M455 366h1M519 366h4M76 367h4M191 367h1M271 367h1M359 367h1M457 367h1M523 367h3M73 368h3M84 368h2M189 368h1M459 368h1M513 368h2M526 368h2M72 369h1M82 369h2M187 369h1M270 369h1M361 369h1M461 369h1M515 369h3M79 370h3M463 370h1M518 370h4M76 371h3M185 371h1M269 371h1M363 371h1M465 371h1M522 371h3M74 372h2M86 372h2M183 372h1M467 372h1M525 372h1M73 373h1M83 373h3M181 373h1M268 373h1M364 373h1M469 373h1M471 373h1M79 374h4M179 374h1M473 374h1M76 375h3M268 375h1M366 375h1M475 375h1M510 375h2M74 376h2M87 376h2M177 376h1M477 376h1M512 376h2M84 377h3M175 377h1M267 377h1M368 377h1M514 377h3M80 378h4M173 378h1M517 378h3M77 379h3M171 379h1M266 379h1M370 379h1M509 379h2M520 379h2M75 380h2M511 380h2M522 380h2M169 381h1M265 381h1M371 381h1M513 381h3M167 382h1M516 382h3M90 383h1M165 383h1M373 383h1M508 383h1M519 383h2M88 384h2M163 384h1M509 384h2M521 384h1M85 385h3M263 385h1M375 385h1M511 385h3M82 386h3M161 386h1M507 386h1M514 386h3M80 387h2M91 387h2M159 387h1M263 387h1M377 387h1M508 387h2M517 387h2M78 388h2M89 388h2M157 388h1M510 388h2M519 388h2M86 389h3M155 389h1M262 389h1M378 389h1M512 389h2M84 390h2M93 390h1M514 390h2M82 391h2M91 391h2M153 391h1M261 391h1M380 391h1M516 391h2M80 392h2M89 392h2M151 392h1M518 392h1M87 393h2M149 393h1M260 393h1M382 393h1M85 394h2M94 394h2M147 394h1M503 394h2M83 395h2M92 395h2M259 395h1M384 395h1M505 395h2M82 396h1M90 396h2M145 396h1M507 396h2M88 397h2M143 397h1M258 397h1M386 397h1M501 397h1M509 397h3M86 398h2M141 398h1M502 398h2M512 398h2M84 399h2M139 399h1M258 399h1M387 399h1M504 399h2M514 399h2M506 400h2M98 401h2M137 401h1M257 401h1M389 401h1M499 401h2M508 401h2M96 402h2M135 402h1M501 402h2M510 402h2M94 403h2M256 403h1M391 403h1M503 403h2M512 403h2M92 404h2M498 404h1M505 404h2M90 405h2M99 405h2M255 405h1M393 405h1M499 405h2M507 405h2M88 406h2M97 406h2M501 406h2M509 406h2M87 407h1M95 407h2M254 407h1M394 407h1M503 407h1M511 407h1M94 408h1M504 408h2M92 409h2M101 409h2M254 409h1M396 409h1M506 409h2M90 410h2M99 410h2M508 410h2M89 411h1M97 411h2M104 411h1M253 411h1M398 411h1M494 411h1M96 412h1M102 412h2M495 412h2M94 413h2M101 413h1M252 413h1M400 413h1M497 413h2M92 414h2M99 414h2M492 414h1M499 414h1M91 415h1M97 415h2M251 415h1M401 415h1M493 415h2M500 415h2M96 416h1M495 416h1M502 416h2M94 417h2M250 417h1M403 417h1M496 417h2M504 417h2M93 418h1M109 418h1M490 418h1M498 418h2M107 419h2M249 419h1M405 419h1M491 419h2M500 419h1M105 420h2M493 420h1M501 420h2M103 421h2M249 421h1M407 421h1M488 421h1M494 421h2M503 421h1M102 422h1M109 422h2M489 422h2M496 422h2M100 423h2M108 423h1M248 423h1M408 423h1M491 423h1M498 423h1M98 424h2M106 424h2M492 424h2M499 424h2M97 425h1M105 425h1M113 425h1M247 425h1M410 425h1M494 425h2M501 425h1M103 426h2M111 426h2M496 426h1M102 427h1M110 427h1M246 427h1M412 427h1M497 427h2M100 428h2M108 428h2M115 428h1M483 428h1M499 428h1M106 429h2M113 429h2M245 429h1M414 429h1M484 429h2M105 430h1M112 430h1M486 430h1M103 431h2M111 431h1M244 431h1M416 431h1M481 431h1M487 431h2M102 432h1M109 432h2M482 432h2M489 432h2M108 433h1M244 433h1M417 433h1M484 433h1M491 433h1M107 434h1M120 434h1M479 434h1M485 434h1M492 434h2M105 435h2M118 435h2M243 435h1M419 435h1M480 435h1M486 435h2M494 435h1M117 436h1M481 436h2M488 436h1M116 437h1M122 437h1M242 437h1M421 437h1M476 437h1M483 437h1M489 437h1M114 438h2M121 438h1M477 438h2M484 438h1M490 438h2M113 439h1M119 439h2M241 439h1M423 439h1M479 439h1M485 439h1M112 440h1M118 440h1M125 440h1M480 440h1M486 440h2M110 441h2M117 441h1M124 441h1M240 441h1M424 441h1M481 441h2M488 441h1M109 442h1M116 442h1M122 442h2M483 442h1M489 442h1M115 443h1M121 443h1M127 443h1M239 443h1M426 443h1M471 443h1M484 443h1M113 444h2M120 444h1M126 444h1M472 444h1M485 444h2M112 445h1M119 445h1M125 445h1M239 445h1M473 445h2M487 445h1M118 446h1M124 446h1M469 446h1M475 446h1M116 447h2M122 447h2M238 447h1M470 447h1M476 447h1M115 448h1M121 448h1M471 448h1M477 448h1M120 449h1M132 449h1M237 449h1M466 449h1M472 449h1M478 449h1M119 450h1M131 450h1M467 450h1M473 450h1M479 450h2M118 451h1M130 451h1M236 451h1M332 451h1M468 451h1M474 451h2M481 451h1M117 452h1M129 452h1M135 452h1M332 452h1M463 452h1M469 452h1M476 452h1M128 453h1M134 453h1M235 453h1M332 453h1M464 453h1M470 453h1M477 453h1M127 454h1M133 454h1M333 454h1M465 454h1M471 454h2M478 454h1M126 455h1M132 455h1M138 455h1M235 455h1M333 455h1M466 455h1M473 455h1M125 456h1M131 456h1M137 456h1M333 456h1M467 456h1M474 456h1M124 457h1M130 457h1M136 457h1M234 457h1M333 457h1M468 457h2M475 457h1M123 458h1M129 458h1M135 458h1M140 458h1M333 458h1M458 458h1M470 458h1M476 458h1M128 459h1M134 459h1M139 459h1M233 459h1M333 459h1M459 459h1M471 459h1M127 460h1M133 460h1M138 460h1M334 460h1M455 460h1M460 460h1M472 460h1M126 461h1M132 461h1M137 461h1M232 461h1M334 461h1M456 461h1M461 461h1M473 461h1M131 462h1M136 462h1M334 462h1M457 462h1M462 462h1M130 463h1M135 463h1M146 463h1M231 463h1M334 463h1M452 463h1M458 463h1M463 463h2M129 464h1M135 464h1M145 464h1M453 464h1M459 464h1M465 464h1M128 465h1M134 465h1M144 465h1M230 465h1M454 465h1M460 465h1M466 465h1M133 466h1M143 466h1M149 466h1M449 466h1M455 466h1M461 466h1M467 466h1M132 467h1M142 467h1M148 467h1M450 467h1M456 467h1M462 467h1M468 467h1M131 468h1M141 468h1M147 468h1M451 468h1M457 468h1M463 468h1M141 469h1M146 469h1M152 469h1M229 469h1M452 469h1M458 469h1M464 469h1M140 470h1M145 470h1M151 470h1M453 470h1M459 470h1M465 470h1M139 471h1M144 471h1M150 471h1M155 471h1M228 471h1M443 471h1M454 471h1M460 471h1M138 472h1M144 472h1M149 472h1M154 472h1M444 472h1M455 472h1M461 472h1M137 473h1M143 473h1M148 473h1M153 473h1M227 473h1M440 473h1M445 473h1M456 473h1M142 474h1M147 474h1M153 474h1M441 474h1M446 474h1M457 474h1M141 475h1M147 475h1M152 475h1M226 475h1M442 475h1M447 475h1M458 475h1M140 476h1M146 476h1M151 476h1M161 476h1M437 476h1M442 476h1M448 476h1M145 477h1M150 477h1M160 477h1M225 477h1M438 477h1M443 477h1M448 477h1M144 478h1M149 478h1M160 478h1M434 478h1M439 478h1M444 478h1M449 478h1M148 479h1M159 479h1M164 479h1M435 479h1M439 479h1M445 479h1M450 479h1M148 480h1M158 480h1M163 480h1M435 480h1M440 480h1M446 480h1M451 480h1M147 481h1M157 481h1M162 481h1M167 481h1M436 481h1M441 481h1M447 481h1M452 481h1M157 482h1M162 482h1M166 482h1M437 482h1M442 482h1M447 482h1M156 483h1M161 483h1M166 483h1M170 483h1M428 483h1M438 483h1M443 483h1M448 483h1M155 484h1M160 484h1M165 484h1M169 484h1M429 484h1M438 484h1M444 484h1M154 485h1M159 485h1M164 485h1M169 485h1M425 485h1M429 485h1M439 485h1M444 485h1M154 486h1M158 486h1M163 486h1M168 486h1M426 486h1M430 486h1M440 486h1M445 486h1M153 487h1M158 487h1M163 487h1M167 487h1M426 487h1M431 487h1M441 487h1M157 488h1M162 488h1M167 488h1M177 488h1M422 488h1M427 488h1M432 488h1M441 488h1M156 489h1M161 489h1M166 489h1M176 489h1M418 489h1M422 489h1M428 489h1M432 489h1M442 489h1M160 490h1M166 490h1M176 490h1M180 490h1M419 490h1M423 490h1M428 490h1M433 490h1M160 491h1M165 491h1M175 491h1M179 491h1M419 491h1M424 491h1M429 491h1M434 491h1M164 492h1M174 492h1M179 492h1M184 492h1M420 492h1M424 492h1M429 492h1M435 492h1M164 493h1M174 493h1M178 493h1M183 493h1M420 493h1M425 493h1M430 493h1M435 493h1M163 494h1M173 494h1M177 494h1M183 494h1M187 494h1M411 494h1M421 494h1M426 494h1M431 494h1M173 495h1M177 495h1M182 495h1M186 495h1M412 495h1M422 495h1M426 495h1M431 495h1M172 496h1M176 496h1M181 496h1M186 496h1M409 496h1M412 496h1M422 496h1M427 496h1M432 496h1M171 497h1M176 497h1M181 497h1M185 497h1M409 497h1M413 497h1M423 497h1M428 497h1M171 498h1M175 498h1M180 498h1M185 498h1M194 498h1M405 498h1M410 498h1M414 498h1M423 498h1M428 498h1M170 499h1M174 499h1M180 499h1M184 499h1M193 499h1M197 499h1M401 499h1M405 499h1M410 499h1M414 499h1M424 499h1M174 500h1M179 500h1M183 500h1M193 500h1M197 500h1M402 500h1M406 500h1M411 500h1M415 500h1M424 500h1M173 501h1M178 501h1M183 501h1M192 501h1M196 501h1M201 501h1M402 501h1M406 501h1M412 501h1M415 501h1M425 501h1M178 502h1M182 502h1M192 502h1M196 502h1M200 502h1M403 502h1M407 502h1M412 502h1M416 502h1M177 503h1M182 503h1M191 503h1M195 503h1M200 503h1M204 503h1M394 503h1M403 503h1M408 503h1M413 503h1M417 503h1M181 504h1M190 504h1M195 504h1M199 504h1M204 504h1M395 504h1M404 504h1M408 504h1M413 504h1M417 504h1M181 505h1M190 505h1M194 505h1M199 505h1M203 505h1M390 505h1M395 505h1M404 505h1M409 505h1M414 505h1M418 505h1M189 506h1M194 506h1M198 506h1M203 506h1M387 506h1M391 506h1M396 506h1M405 506h1M409 506h1M414 506h1M189 507h1M193 507h1M198 507h1M202 507h1M212 507h1M387 507h1M391 507h1M396 507h1M405 507h1M410 507h1M415 507h1M188 508h1M193 508h1M197 508h1M202 508h1M211 508h1M215 508h1M383 508h1M388 508h1M392 508h1M397 508h1M406 508h1M410 508h1M188 509h1M192 509h1M197 509h1M201 509h1M211 509h1M214 509h1M219 509h1M384 509h1M388 509h1M392 509h1M397 509h1M406 509h1M411 509h1M192 510h1M196 510h1M201 510h1M210 510h1M214 510h1M219 510h1M223 510h1M376 510h1M384 510h1M389 510h1M393 510h1M398 510h1M407 510h1M191 511h1M196 511h1M201 511h1M210 511h1M213 511h1M218 511h1M223 511h1M372 511h1M376 511h1M385 511h1M389 511h1M393 511h1M398 511h1M407 511h1M195 512h1M200 512h1M209 512h1M213 512h1M218 512h1M222 512h1M372 512h1M377 512h1M385 512h1M390 512h1M394 512h1M399 512h1M195 513h1M200 513h1M209 513h1M213 513h1M217 513h1M222 513h1M230 513h1M368 513h1M373 513h1M377 513h1M385 513h1M390 513h1M394 513h1M399 513h1M199 514h1M208 514h1M212 514h1M217 514h1M221 514h1M230 514h1M234 514h1M365 514h1M368 514h1M373 514h1M377 514h1M386 514h1M390 514h1M395 514h1M400 514h1M199 515h1M208 515h1M212 515h1M217 515h1M221 515h1M229 515h1M234 515h1M238 515h1M365 515h1M369 515h1M373 515h1M378 515h1M386 515h1M391 515h1M395 515h1M207 516h1M212 516h1M216 516h1M221 516h1M229 516h1M233 516h1M238 516h1M241 516h1M357 516h1M366 516h1M369 516h1M374 516h1M378 516h1M386 516h1M391 516h1M396 516h1M207 517h1M211 517h1M216 517h1M220 517h1M229 517h1M233 517h1M237 517h1M241 517h1M353 517h1M357 517h1M366 517h1M370 517h1M374 517h1M378 517h1M387 517h1M392 517h1M206 518h1M211 518h1M216 518h1M220 518h1M228 518h1M233 518h1M237 518h1M241 518h1M249 518h1M349 518h1M353 518h1M358 518h1M366 518h1M370 518h1M374 518h1M378 518h1M387 518h1M392 518h1M210 519h1M215 519h1M220 519h1M228 519h1M232 519h1M237 519h1M240 519h1M249 519h1M253 519h1M346 519h1M349 519h1M354 519h1M358 519h1M367 519h1M370 519h1M374 519h1M379 519h1M388 519h1M210 520h1M215 520h1M219 520h1M228 520h1M232 520h1M236 520h1M240 520h1M249 520h1M253 520h1M257 520h1M346 520h1M349 520h1M354 520h1M358 520h1M367 520h1M371 520h1M375 520h1M379 520h1M388 520h1M214 521h1M219 521h1M228 521h1M232 521h1M236 521h1M240 521h1M248 521h1M253 521h1M257 521h1M261 521h1M334 521h1M338 521h1M346 521h1M350 521h1M354 521h1M359 521h1M367 521h1M371 521h1M375 521h1M379 521h1M214 522h1M218 522h1M227 522h1M232 522h1M236 522h1M240 522h1M248 522h1M252 522h1M257 522h1M261 522h1M268 522h1M326 522h1M330 522h1M334 522h1M338 522h1M346 522h1M350 522h1M355 522h1M359 522h1M367 522h1M371 522h1M375 522h1M380 522h1M218 523h1M227 523h1M231 523h1M236 523h1M239 523h1M248 523h1M252 523h1M256 523h1M260 523h1M268 523h1M272 523h1M276 523h1M280 523h1M310 523h1M314 523h1M318 523h1M326 523h1M330 523h1M334 523h1M338 523h1M347 523h1M350 523h1M355 523h1M359 523h1M368 523h1M372 523h1M376 523h1M380 523h1M227 524h1M231 524h1M235 524h1M239 524h1M248 524h1M252 524h1M256 524h1M260 524h1M268 524h1M272 524h1M276 524h1M280 524h1M288 524h1M292 524h1M296 524h1M299 524h1M307 524h1M310 524h1M314 524h1M318 524h1M326 524h1M330 524h1M334 524h1M339 524h1M347 524h1M350 524h1M355 524h1M359 524h1M368 524h1M372 524h1M376 524h1M226 525h1M231 525h1M235 525h1M239 525h1M247 525h1M252 525h1M256 525h1M260 525h1M268 525h1M272 525h1M276 525h1M280 525h1M288 525h1M292 525h1M296 525h1M299 525h1M307 525h1M310 525h1M314 525h1M318 525h1M326 525h1M330 525h1M335 525h1M339 525h1M347 525h1M351 525h1M355 525h1M360 525h1M368 525h1M373 525h1M230 526h1M235 526h1M239 526h1M247 526h1M251 526h1M256 526h1M260 526h1M267 526h1M272 526h1M276 526h1M280 526h1M288 526h1M292 526h1M296 526h1M299 526h1M307 526h1M310 526h1M314 526h1M318 526h1M327 526h1M331 526h1M335 526h1M339 526h1M347 526h1M351 526h1M356 526h1M360 526h1M369 526h1M230 527h1M234 527h1M238 527h1M247 527h1M251 527h1M255 527h1M259 527h1M267 527h1M272 527h1M276 527h1M280 527h1M288 527h1M292 527h1M296 527h1M299 527h1M307 527h1M310 527h1M314 527h1M319 527h1M327 527h1M331 527h1M335 527h1M339 527h1M347 527h1M351 527h1M356 527h1M360 527h1M234 528h1M238 528h1M247 528h1M251 528h1M255 528h1M259 528h1M267 528h1M272 528h1M276 528h1M280 528h1M288 528h1M292 528h1M296 528h1M299 528h1M307 528h1M310 528h1M314 528h1M319 528h1M327 528h1M331 528h1M335 528h1M339 528h1M347 528h1M351 528h1M356 528h1M361 528h1M238 529h1M246 529h1M251 529h1M255 529h1M259 529h1M267 529h1M271 529h1M276 529h1M280 529h1M288 529h1M292 529h1M296 529h1M299 529h1M307 529h1M310 529h1M314 529h1M319 529h1M327 529h1M331 529h1M335 529h1M339 529h1M348 529h1M352 529h1M357 529h1M361 529h1M246 530h1M250 530h1M255 530h1M259 530h1M267 530h1M271 530h1M275 530h1M279 530h1M288 530h1M292 530h1M296 530h1M299 530h1M307 530h1M311 530h1M315 530h1M319 530h1M327 530h1M331 530h1M335 530h1M339 530h1M348 530h1M352 530h1M357 530h1M246 531h1M250 531h1M254 531h1M259 531h1M267 531h1M271 531h1M275 531h1M279 531h1M287 531h1M291 531h1M296 531h1M299 531h1M307 531h1M311 531h1M315 531h1M319 531h1M327 531h1M331 531h1M336 531h1M340 531h1M348 531h1M352 531h1M250 532h1M254 532h1M258 532h1M266 532h1M271 532h1M275 532h1M279 532h1M287 532h1M291 532h1M296 532h1M299 532h1M307 532h1M311 532h1M315 532h1M319 532h1M327 532h1M332 532h1M336 532h1M340 532h1M348 532h1M254 533h1M258 533h1M266 533h1M271 533h1M275 533h1M279 533h1M287 533h1M291 533h1M296 533h1M299 533h1M307 533h1M311 533h1M315 533h1M319 533h1M328 533h1M332 533h1M336 533h1M340 533h1M266 534h1M271 534h1M275 534h1M279 534h1M287 534h1M291 534h1M296 534h1M299 534h1M307 534h1M311 534h1M315 534h1M320 534h1M328 534h1M332 534h1M336 534h1M266 535h1M271 535h1M275 535h1M279 535h1M287 535h1M291 535h1M296 535h1M299 535h1M307 535h1M311 535h1M315 535h1M320 535h1M328 535h1M332 535h1M271 536h1M275 536h1M279 536h1M287 536h1M291 536h1M296 536h1M299 536h1M307 536h1M311 536h1M315 536h1M320 536h1M287 537h1M291 537h1M296 537h1M299 537h1M307 537h1"/><path stroke="#ff0000" d="M462 87h5M461 88h1M467 88h1M460 89h1M468 89h1M459 90h1M469 90h1M458 91h1M470 91h1M458 92h1M470 92h1M458 93h1M470 93h1M458 94h1M470 94h1M458 95h1M470 95h1M459 96h1M469 96h1M460 97h1M468 97h1M460 98h1M468 98h1M456 99h1M460 99h1M468 99h1M457 100h1M459 100h1M469 100h1M458 101h1M470 101h1M471 102h1M472 103h1M750 106h3M751 107h2M750 108h1M752 108h1M745 109h1M749 109h1M746 110h1M748 110h1M747 111h1M746 112h1M748 112h1M745 113h1M749 113h1M744 114h1M745 146h1M751 146h1M746 147h1M750 147h1M747 148h3M746 149h1M750 149h1M745 150h1M751 150h1M745 151h1M751 151h1M745 152h1M751 152h1M746 153h1M750 153h1M747 154h3M744 186h1M746 186h1M748 186h1M745 187h1M747 187h1M749 187h1M751 187h1M158 188h1M745 188h1M747 188h1M749 188h3M157 189h1M745 189h1M747 189h1M749 189h1M751 189h1M147 190h2M156 190h1M745 190h1M747 190h1M749 190h1M751 190h1M149 191h1M156 191h1M745 191h1M747 191h1M749 191h1M751 191h1M150 192h1M156 192h1M745 192h1M747 192h1M749 192h1M751 192h1M150 193h1M156 193h1M745 193h1M747 193h1M750 193h1M150 194h1M156 194h1M749 194h1M751 194h1M149 195h1M156 195h1M149 196h1M156 196h1M148 197h1M156 197h1M148 198h1M156 198h1M147 199h1M156 199h1M147 200h1M156 200h1M146 201h1M156 201h1M146 202h15M156 203h1M156 204h1M177 213h1M182 216h1M182 218h1M183 220h1M183 221h1M183 222h1M183 223h1M183 224h1M183 225h1M184 226h1M184 227h1M184 228h1M184 229h1M184 230h1M184 231h1M185 232h1M185 233h1M185 234h1M185 235h1M185 236h1M747 236h3M185 237h1M745 237h2M750 237h2M186 238h1M745 238h1M751 238h1M186 239h1M744 239h1M752 239h1M186 240h1M744 240h1M748 240h1M752 240h1M186 241h1M744 241h1M752 241h1M186 242h1M745 242h1M751 242h1M186 243h1M745 243h2M750 243h2M187 244h1M747 244h3M187 245h1M187 246h1M187 247h1M187 248h1M187 249h1M188 250h1M44 251h5M188 251h1M47 252h2M188 252h1M46 253h1M48 253h1M188 253h1M45 254h1M48 254h1M188 254h1M44 255h1M48 255h1M188 255h1M43 256h1M189 256h1M34 257h1M42 257h1M189 257h1M35 258h1M41 258h1M189 258h1M36 259h1M40 259h1M189 259h1M37 260h1M39 260h1M189 260h1M38 261h1M189 261h1M37 262h1M39 262h1M190 262h1M36 263h1M40 263h1M190 263h1M35 264h1M41 264h1M190 264h1M34 265h1M42 265h1M190 265h1M33 266h1M190 266h1M32 267h1M190 267h1M191 268h1M191 269h1M191 270h1M191 271h1M191 272h1M191 273h1M192 274h1M192 275h1M192 276h1M750 276h3M192 277h1M751 277h2M192 278h1M750 278h1M752 278h1M192 279h1M745 279h5M193 280h1M744 280h1M749 280h1M193 281h1M744 281h1M749 281h1M193 282h1M744 282h1M749 282h1M193 283h1M744 283h1M749 283h1M193 284h1M745 284h4M193 285h1M194 286h1M751 286h1M194 287h1M745 287h2M750 287h1M194 288h1M747 288h1M750 288h1M194 289h1M747 289h1M750 289h1M194 290h1M746 290h1M750 290h1M194 291h1M746 291h1M750 291h1M195 292h1M745 292h1M750 292h1M195 293h1M745 293h8M155 294h1M195 294h1M750 294h1M156 295h1M195 295h1M157 296h1M195 296h1M158 297h1M195 297h1M159 298h1M196 298h1M149 299h1M155 299h1M160 299h1M196 299h1M156 300h1M161 300h1M196 300h1M157 301h1M162 301h1M196 301h1M158 302h1M162 302h1M196 302h1M159 303h1M163 303h1M196 303h1M164 304h1M197 304h1M161 305h1M165 305h1M197 305h1M156 306h1M162 306h1M166 306h1M197 306h1M163 307h1M167 307h1M197 307h1M164 308h1M168 308h1M197 308h1M159 309h1M165 309h1M169 309h1M197 309h1M166 310h1M170 310h1M198 310h1M167 311h1M171 311h1M198 311h1M162 312h1M168 312h1M172 312h1M198 312h1M169 313h1M173 313h1M198 313h1M169 314h1M174 314h1M198 314h1M165 315h1M170 315h1M175 315h1M198 315h1M171 316h1M176 316h1M199 316h1M172 317h1M176 317h1M199 317h1M168 318h1M173 318h1M177 318h1M199 318h1M174 319h1M178 319h1M199 319h1M175 320h1M179 320h1M199 320h1M171 321h1M180 321h1M199 321h1M177 322h1M181 322h1M200 322h1M178 323h1M182 323h1M200 323h1M174 324h1M179 324h1M183 324h1M200 324h1M180 325h1M184 325h1M200 325h1M181 326h1M185 326h1M200 326h1M177 327h1M182 327h1M186 327h1M200 327h1M183 328h1M187 328h1M201 328h1M184 329h1M188 329h1M201 329h1M180 330h1M185 330h1M189 330h1M201 330h1M186 331h1M190 331h1M201 331h1M187 332h1M190 332h1M201 332h1M183 333h1M188 333h1M191 333h1M201 333h1M189 334h1M192 334h1M202 334h1M190 335h1M193 335h1M202 335h1M186 336h1M191 336h1M194 336h1M202 336h1M192 337h1M195 337h1M202 337h1M193 338h1M196 338h1M202 338h1M189 339h1M194 339h1M197 339h1M202 339h1M195 340h1M198 340h1M203 340h1M196 341h1M199 341h1M203 341h1M192 342h1M197 342h1M200 342h1M203 342h1M197 343h1M201 343h1M203 343h1M198 344h1M202 344h2M195 345h1M199 345h1M203 345h1M200 346h1M204 346h1M201 347h1M204 347h1M198 348h1M202 348h1M204 348h2M203 349h2M206 349h1M204 350h1M207 350h1M201 351h1M204 351h2M208 351h1M432 351h2M205 352h2M209 352h1M430 352h2M205 353h1M207 353h1M210 353h1M428 353h2M204 354h2M208 354h1M211 354h1M426 354h2M438 354h1M205 355h1M209 355h1M212 355h1M424 355h2M205 356h1M210 356h1M213 356h1M421 356h3M205 357h1M207 357h1M211 357h1M214 357h1M419 357h2M469 357h6M206 358h1M212 358h1M215 358h1M417 358h2M473 358h2M206 359h1M213 359h1M216 359h1M415 359h2M472 359h1M474 359h1M206 360h1M210 360h1M214 360h1M217 360h1M413 360h2M471 360h1M474 360h1M206 361h1M215 361h1M218 361h1M410 361h3M470 361h1M474 361h1M206 362h1M216 362h1M218 362h1M408 362h2M469 362h1M474 362h1M206 363h1M213 363h1M217 363h1M219 363h1M406 363h2M461 363h5M468 363h1M207 364h1M218 364h1M220 364h1M404 364h2M460 364h1M466 364h2M207 365h1M219 365h1M221 365h1M402 365h2M459 365h1M467 365h1M207 366h1M216 366h1M220 366h1M222 366h1M399 366h3M458 366h1M468 366h1M207 367h1M221 367h1M223 367h1M397 367h2M458 367h1M468 367h1M207 368h1M222 368h1M224 368h1M395 368h2M458 368h1M468 368h1M207 369h1M219 369h1M223 369h1M225 369h1M393 369h2M458 369h1M468 369h1M208 370h1M224 370h1M226 370h1M391 370h2M458 370h1M468 370h1M208 371h1M225 371h1M227 371h1M388 371h3M459 371h1M467 371h1M208 372h1M222 372h1M225 372h1M228 372h1M386 372h2M460 372h1M466 372h1M208 373h1M226 373h1M229 373h1M384 373h2M461 373h5M208 374h1M225 374h1M227 374h1M230 374h1M382 374h2M208 375h1M228 375h1M231 375h1M379 375h3M209 376h1M229 376h1M231 376h1M377 376h2M209 377h1M228 377h1M230 377h1M232 377h1M375 377h2M209 378h1M231 378h1M233 378h1M373 378h2M209 379h1M232 379h1M234 379h1M371 379h2M209 380h1M231 380h1M233 380h1M235 380h1M368 380h3M209 381h1M234 381h1M236 381h1M366 381h2M210 382h1M235 382h1M237 382h1M364 382h2M210 383h1M234 383h1M236 383h1M238 383h1M362 383h2M210 384h1M237 384h1M239 384h1M360 384h2M210 385h1M238 385h1M240 385h1M357 385h3M210 386h1M237 386h1M239 386h1M241 386h1M355 386h2M210 387h1M240 387h1M242 387h1M353 387h2M211 388h1M241 388h1M243 388h1M351 388h2M211 389h1M240 389h1M242 389h1M244 389h1M349 389h2M211 390h1M243 390h1M245 390h1M346 390h3M244 391h2M344 391h2M211 392h1M243 392h1M245 392h2M342 392h2M211 393h1M246 393h2M340 393h2M212 394h1M247 394h2M338 394h2M212 395h1M246 395h1M248 395h2M335 395h3M212 396h1M249 396h2M333 396h2M212 397h1M250 397h2M331 397h2M212 398h1M249 398h1M251 398h2M329 398h2M212 399h1M252 399h2M327 399h2M213 400h1M252 400h1M254 400h1M324 400h3M213 401h1M252 401h2M255 401h1M322 401h2M213 402h1M254 402h1M256 402h1M320 402h2M213 403h1M255 403h1M257 403h1M318 403h2M213 404h1M255 404h2M258 404h1M316 404h2M213 405h1M257 405h1M259 405h1M313 405h3M214 406h1M258 406h2M311 406h2M214 407h1M258 407h3M309 407h2M214 408h1M260 408h2M307 408h2M214 409h1M261 409h2M305 409h2M214 410h1M261 410h3M302 410h3M214 411h1M263 411h2M300 411h2M215 412h1M264 412h2M298 412h2M215 413h1M264 413h3M296 413h2M266 414h2M293 414h3M215 415h1M267 415h2M291 415h2M267 416h3M289 416h2M269 417h2M287 417h2M270 418h2M285 418h2M270 419h3M282 419h3M272 420h2M280 420h2M273 421h1M278 421h2M273 422h2M276 422h2M274 423h2M271 424h3M276 424h1M269 425h2M276 425h2M268 426h1M278 426h1M265 427h2M279 427h1M263 428h2M279 428h2M260 429h3M280 429h2M258 430h2M281 430h2M256 431h2M282 431h2M254 432h2M283 432h2M252 433h2M284 433h2M250 434h2M285 434h2M286 435h2M287 436h1M288 437h1M289 438h1M290 439h1M248 440h1M291 440h1M292 441h1M293 442h1M294 443h1M236 460h5M234 461h2M241 461h2M233 462h1M243 462h1M232 463h1M244 463h1M231 464h1M245 464h1M231 465h1M245 465h1M230 466h1M246 466h1M230 467h1M246 467h1M230 468h1M238 468h1M246 468h1M230 469h1M246 469h1M230 470h1M246 470h1M231 471h1M245 471h1M231 472h1M245 472h1M232 473h1M244 473h1M233 474h1M243 474h1M234 475h2M241 475h2M236 476h5M387 536h3M397 536h3M386 537h1M390 537h1M396 537h1M400 537h1M385 538h1M391 538h1M395 538h1M401 538h1M385 539h1M391 539h1M395 539h1M401 539h1M385 540h1M391 540h1M395 540h1M401 540h1M386 541h1M392 541h1M394 541h1M400 541h1M387 542h1M392 542h1M394 542h1M399 542h1M392 543h1M394 543h1M392 544h1M394 544h1M393 545h1M393 546h1M393 547h1M393 548h1M393 549h1M393 550h1M393 551h1M393 552h1"/><path stroke="#0000ff" d="M87 126h1M91 126h1M95 126h1M88 127h1M90 127h1M92 127h1M94 127h1M96 127h1M89 128h1M93 128h1M97 128h1M89 129h1M93 129h1M97 129h1M89 130h1M93 130h1M97 130h1M89 131h1M93 131h1M97 131h1M89 132h1M93 132h1M97 132h1M89 133h1M93 133h1M97 133h1M89 134h1M93 134h1M97 134h1M89 135h1M93 135h1M97 135h1M89 136h1M93 136h1M97 136h1M745 136h2M750 136h2M89 137h1M93 137h1M97 137h1M102 137h1M744 137h1M747 137h1M749 137h1M752 137h1M89 138h1M93 138h1M97 138h1M101 138h3M744 138h1M747 138h1M749 138h1M752 138h1M89 139h1M93 139h1M97 139h1M102 139h1M745 139h1M747 139h1M749 139h1M751 139h1M89 140h1M93 140h1M97 140h1M102 140h1M748 140h1M98 141h1M101 141h1M748 141h1M99 142h2M748 142h1M748 143h1M748 144h1M747 177h3M745 178h2M750 178h2M744 179h1M749 179h1M752 179h1M745 180h2M749 180h1M752 180h1M744 181h1M747 181h1M750 181h2M744 182h1M747 182h1M752 182h1M745 183h2M750 183h2M747 184h3M542 198h5M539 199h3M547 199h1M538 200h1M548 200h3M537 201h1M547 201h1M551 201h1M536 202h1M546 202h1M552 202h1M546 203h1M552 203h1M538 204h3M546 204h1M552 204h1M537 205h1M541 205h1M547 205h1M551 205h1M536 206h1M542 206h1M548 206h3M536 207h1M542 207h1M536 208h1M542 208h1M552 208h1M537 209h1M541 209h1M551 209h1M538 210h3M550 210h1M541 211h1M547 211h3M542 212h5M750 216h3M751 217h2M750 218h1M752 218h1M745 219h1M749 219h1M746 220h1M748 220h1M747 221h1M746 222h1M748 222h1M745 223h1M749 223h1M744 224h1M746 246h3M745 247h1M749 247h1M746 248h1M750 248h1M747 249h1M751 249h1M747 250h1M751 250h1M747 251h1M751 251h1M746 252h1M750 252h1M745 253h1M749 253h1M746 254h3M116 273h5M115 274h1M121 274h2M114 275h1M123 275h1M115 276h1M124 276h1M116 277h1M125 277h1M117 278h1M125 278h1M117 279h1M126 279h1M118 280h1M126 280h1M118 281h1M126 281h1M118 282h1M126 282h1M117 283h1M126 283h1M117 284h1M125 284h1M116 285h1M125 285h1M115 286h1M124 286h1M114 287h1M123 287h1M115 288h1M121 288h2M116 289h5M149 294h1M149 305h1M114 310h1M119 310h3M126 310h1M114 311h1M118 311h1M122 311h1M126 311h1M114 312h1M118 312h1M122 312h1M126 312h1M114 313h1M118 313h1M122 313h1M126 313h1M114 314h1M119 314h3M126 314h1M115 315h1M125 315h1M115 316h1M125 316h1M745 316h1M748 316h1M751 316h1M116 317h2M123 317h2M744 317h9M118 318h5M745 318h1M748 318h1M751 318h1M120 319h1M746 319h1M748 319h1M750 319h1M120 320h1M747 320h3M120 321h1M748 321h1M116 322h9M746 322h5M120 323h1M748 323h1M120 324h1M748 324h1M120 325h1M120 326h1M745 326h1M748 326h1M751 326h1M745 327h1M747 327h1M749 327h1M751 327h1M745 328h1M748 328h1M751 328h1M746 329h1M750 329h1M747 330h3M748 331h1M746 332h5M748 333h1M748 334h1M211 420h1M187 436h1M193 436h1M199 436h1M187 437h1M193 437h1M199 437h1M186 438h3M191 438h5M198 438h3M187 439h1M193 439h1M199 439h1M187 440h1M193 440h1M199 440h1M188 441h1M193 441h1M198 441h1M188 442h1M193 442h1M198 442h1M189 443h2M193 443h1M196 443h2M191 444h5M193 445h1M193 446h1M193 447h1M189 448h9M193 449h1M193 450h1M193 451h1M193 452h1M251 550h1M267 550h1M252 551h1M266 551h1M253 552h1M265 552h1M254 553h1M264 553h1M254 554h1M264 554h1M255 555h1M263 555h1M255 556h1M263 556h1M255 557h1M263 557h1M251 558h17M255 559h1M263 559h1M255 560h1M263 560h1M255 561h1M263 561h1M254 562h1M264 562h1M254 563h1M264 563h1M253 564h1M265 564h1M252 565h1M266 565h1M251 566h1M267 566h1"/><path stroke="#00ffff" d="M406 203h1M406 205h1M407 207h1M407 209h1M407 211h1M408 213h1M408 215h1M409 217h1M182 219h1M409 219h1M182 221h1M409 221h1M182 223h1M410 223h1M181 225h1M410 225h1M181 227h1M410 227h1M181 229h1M411 229h1M181 231h1M411 231h1M181 233h1M411 233h1M181 235h1M412 235h1M181 237h1M412 237h1M181 239h1M413 239h1M181 241h1M413 241h1M180 243h1M413 243h1M180 245h1M414 245h1M180 247h1M414 247h1M180 249h1M414 249h1M180 251h1M415 251h1M180 253h1M415 253h1M180 255h1M415 255h1M180 257h1M416 257h1M179 259h1M416 259h1M179 261h1M417 261h1M179 263h1M417 263h1M179 265h1M417 265h1M179 267h1M418 267h1M179 269h1M418 269h1M179 271h1M418 271h1M179 273h1M419 273h1M178 275h1M419 275h1M178 277h1M420 277h1M178 279h1M420 279h1M178 281h1M420 281h1M178 283h1M421 283h1M178 285h1M421 285h1M178 287h1M421 287h1M178 289h1M422 289h1M178 291h1M422 291h1M177 293h1M422 293h1M177 295h1M423 295h1M156 296h1M177 297h1M423 297h1M157 298h1M177 299h1M424 299h1M158 300h1M177 301h1M424 301h1M159 302h1M177 303h1M424 303h1M160 304h1M177 305h1M425 305h1M161 306h1M177 307h1M425 307h1M162 308h1M176 309h1M425 309h1M163 310h1M176 311h1M426 311h1M164 312h1M176 313h1M426 313h1M165 314h1M176 315h1M426 315h1M166 316h1M427 317h1M167 318h1M176 319h1M427 319h1M168 320h1M176 321h1M428 321h1M169 322h1M176 323h1M428 323h1M170 324h1M176 325h1M428 325h1M171 326h1M175 327h1M429 327h1M172 328h1M175 329h1M429 329h1M173 330h1M175 331h1M429 331h1M174 332h1M175 333h1M430 333h1M175 334h1M175 335h1M430 335h1M176 336h1M175 337h1M430 337h1M177 338h1M175 339h1M431 339h1M178 340h1M175 341h1M431 341h1M179 342h1M174 343h1M432 343h1M180 344h1M174 345h1M432 345h1M181 346h1M174 347h1M432 347h1M182 348h1M174 349h1M433 349h1M183 350h1M174 351h1M184 352h1M174 353h1M185 354h1M174 355h1M186 356h1M174 357h1M187 358h1M173 359h1M188 360h1M173 361h1M189 362h1M173 363h1M190 364h1M173 365h1M191 366h1M173 367h1M174 368h2M192 368h1M176 369h1M177 370h2M193 370h1M179 371h2M181 372h1M194 372h1M182 373h2M184 374h1M195 374h1M185 375h2M187 376h2M196 376h1M189 377h1M190 378h2M197 378h1M192 379h1M193 380h2M198 380h1M195 381h2M197 382h1M199 382h1M198 383h2M200 384h1M201 385h2M201 386h1M203 386h2M205 387h1M202 388h1M206 388h2M208 389h1M203 390h1M209 390h2M211 391h2M204 392h1M213 392h1M214 393h2M205 394h1M216 394h1M217 395h2M206 396h1M219 396h1M220 397h2M207 398h1M222 398h2M224 399h1M208 400h1M225 400h2M227 401h1M209 402h1M228 402h2M230 403h2M210 404h1M232 404h1M233 405h2M211 406h1M235 406h1M236 407h2M212 408h1M238 408h2M240 409h1M213 410h1M241 410h2M243 411h1M214 412h1M244 412h2M246 413h2M215 414h1M248 414h1M249 415h2M251 416h1M252 417h2M254 418h1M255 419h2M257 420h2M259 421h1M260 422h2M262 423h1M263 424h2M265 425h2M267 426h1M268 427h2M270 428h1M271 429h2M273 430h2M275 431h1M276 432h2M278 433h1M279 434h2M281 435h2M283 436h1M284 437h2M286 438h1M287 439h2M289 440h2M291 441h1M292 442h1"/><path stroke="#007f7f" d="M747 336h3M746 337h1M750 337h1M745 338h1M751 338h1M745 339h1M751 339h1M745 340h1M751 340h1M746 341h1M750 341h1M745 342h2M750 342h2M744 343h1M746 343h1M750 343h1M752 343h1M745 344h1M751 344h1M330 445h1M335 467h5M334 468h1M340 468h1M333 469h1M341 469h1M332 470h1M342 470h1M331 471h1M343 471h1M331 472h1M343 472h1M331 473h1M343 473h1M331 474h1M343 474h1M331 475h1M343 475h1M332 476h1M342 476h1M333 477h1M341 477h1M333 478h1M341 478h1M331 479h3M341 479h3M330 480h1M333 480h1M341 480h1M344 480h1M329 481h1M333 481h1M341 481h1M345 481h1M330 482h1M332 482h1M342 482h1M344 482h1M331 483h1M343 483h1"/></g></svg>
<div id="t">
<div class="l" style="top:6.5px"><span style="color:#ffffff">Astrolog 5.40</span></div>
<div class="l" style="top:16.5px">"xxx"</div>
<div class="l" style="top:26.5px">Thu February 23, 2006</div>
<div class="l" style="top:36.5px"> 2:04am (ST +8:00 GMT)</div>
<div class="l" style="top:46.5px">"Taiwan"</div>
<div class="l" style="top:56.5px">121°31E 25°03N</div>
<div class="l" style="top:66.5px">Placidus houses.</div>
<div class="l" style="top:76.5px">Tropical, Geocentric.</div>
<div class="l" style="top:86.5px">Julian Day = 2453789.2528</div>
<div class="l" style="top:106.5px"><span style="color:#ff0000"> 1st house: </span><span style="color:#ff0000">23Sag57</span></div>
<div class="l" style="top:116.5px"><span style="color:#ffff00"> 2nd house: </span><span style="color:#ffff00">26Cap09</span></div>
<div class="l" style="top:126.5px"><span style="color:#00ff00"> 3rd house: </span><span style="color:#0000ff"> 1Pis15</span></div>
<div class="l" style="top:136.5px"><span style="color:#0000ff"> 4th house: </span><span style="color:#ff0000"> 5Ari28</span></div>
<div class="l" style="top:146.5px"><span style="color:#ff0000"> 5th house: </span><span style="color:#ffff00"> 5Tau12</span></div>
<div class="l" style="top:156.5px"><span style="color:#ffff00"> 6th house: </span><span style="color:#00ff00"> 0Gem33</span></div>
<div class="l" style="top:166.5px"><span style="color:#00ff00"> 7th house: </span><span style="color:#00ff00">23Gem57</span></div>
<div class="l" style="top:176.5px"><span style="color:#0000ff"> 8th house: </span><span style="color:#0000ff">26Can09</span></div>
<div class="l" style="top:186.5px"><span style="color:#ff0000"> 9th house: </span><span style="color:#ffff00"> 1Vir15</span></div>
<div class="l" style="top:196.5px"><span style="color:#ffff00">10th house: </span><span style="color:#00ff00"> 5Lib28</span></div>
<div class="l" style="top:206.5px"><span style="color:#00ff00">11th house: </span><span style="color:#0000ff"> 5Sco12</span></div>
<div class="l" style="top:216.5px"><span style="color:#0000ff">12th house: </span><span style="color:#ff0000"> 0Sag33</span></div>
<div class="l" style="top:236.5px"><span style="color:#ff0000"> Sun: </span><span style="color:#0000ff"> 3Pis59</span><span style="color:#ffffff"> </span> - 0°00'</div>
<div class="l" style="top:246.5px"><span style="color:#0000ff">Moon: </span><span style="color:#ff0000">21Sag48</span><span style="color:#ffffff"> </span> - 5°06'</div>
<div class="l" style="top:256.5px"><span style="color:#00ff00">Merc: </span><span style="color:#0000ff">21Pis57</span><span style="color:#ffffff"> </span> + 1°01'</div>
<div class="l" style="top:266.5px"><span style="color:#00ff00">Venu: </span><span style="color:#ffff00">22Cap31</span><span style="color:#ffffff"> </span> + 5°21'</div>
<div class="l" style="top:276.5px"><span style="color:#ff0000">Mars: </span><span style="color:#00ff00"> 2Gem25</span><span style="color:#ffffff"> </span> + 1°48'</div>
<div class="l" style="top:286.5px"><span style="color:#ff0000">Jupi: </span><span style="color:#0000ff">18Sco43</span><span style="color:#ffffff"> </span> + 1°14'</div>
<div class="l" style="top:296.5px"><span style="color:#ffff00">Satu: </span><span style="color:#ff0000"> 5Leo51</span><span style="color:#ffffff">R</span> + 0°43'</div>
<div class="l" style="top:306.5px"><span style="color:#00ff00">Uran: </span><span style="color:#0000ff">10Pis20</span><span style="color:#ffffff"> </span> - 0°44'</div>
<div class="l" style="top:316.5px"><span style="color:#0000ff">Nept: </span><span style="color:#00ff00">17Aqu55</span><span style="color:#ffffff"> </span> - 0°10'</div>
<div class="l" style="top:326.5px"><span style="color:#0000ff">Plut: </span><span style="color:#ff0000">26Sag26</span><span style="color:#ffffff"> </span> + 7°31'</div>
<div class="l" style="top:336.5px"><span style="color:#007f7f">Node: </span><span style="color:#ff0000"> 6Ari12</span><span style="color:#ffffff">R</span> + 0°00'</div>
<div class="l" style="top:356.5px">Fire: 5, Earth: 1,</div>
<div class="l" style="top:366.5px">Air : 3, Water: 4</div>
<div class="l" style="top:376.5px">Car: 3, Fix: 3, Mut: 7</div>
<div class="l" style="top:386.5px">Yang: 8, Yin: 5</div>
<div class="l" style="top:396.5px">M: 3, N: 8, A: 8, D: 3</div>
<div class="l" style="top:406.5px">Ang: 3, Suc: 3, Cad: 5</div>
<div class="l" style="top:416.5px">Learn: 3, Share: 10</div>
<div class="h" style="left:93.3px;top:353.0px;color:#ff0000">1</div>
<div class="h" style="left:160.3px;top:455.0px;color:#ffff00">2</div>
<div class="h" style="left:275.3px;top:504.0px;color:#00ff00">3</div>
<div class="h" style="left:388.3px;top:483.0px;color:#0000ff">4</div>
<div class="h" style="left:464.3px;top:418.0px;color:#ff0000">5</div>
<div class="h" style="left:500.3px;top:337.0px;color:#ffff00">6</div>
<div class="h" style="left:497.3px;top:237.0px;color:#00ff00">7</div>
<div class="h" style="left:430.3px;top:135.0px;color:#0000ff">8</div>
<div class="h" style="left:315.3px;top:86.0px;color:#ff0000">9</div>
<div class="h" style="left:198.3px;top:107.0px;color:#ffff00">10</div>
<div class="h" style="left:122.3px;top:172.0px;color:#00ff00">11</div>
<div class="h" style="left:86.3px;top:253.0px;color:#0000ff">12</div>
<svg width="760" height="600" viewBox="0 0 760 600" style="position:absolute;left:0;top:0" font-family="Liberation Sans, sans-serif" font-size="20"><text fill="#ff0000" transform="matrix(0.4150 0 0 1.1636 0 308.00)" x="266.82 284.23 298.46" y="0">Asc</text><text fill="#ffff00" transform="matrix(0.5900 0 0 1.2364 0 132.00)" x="433.20 450.30" y="0">MC</text></svg>
</div></div></body></html>
